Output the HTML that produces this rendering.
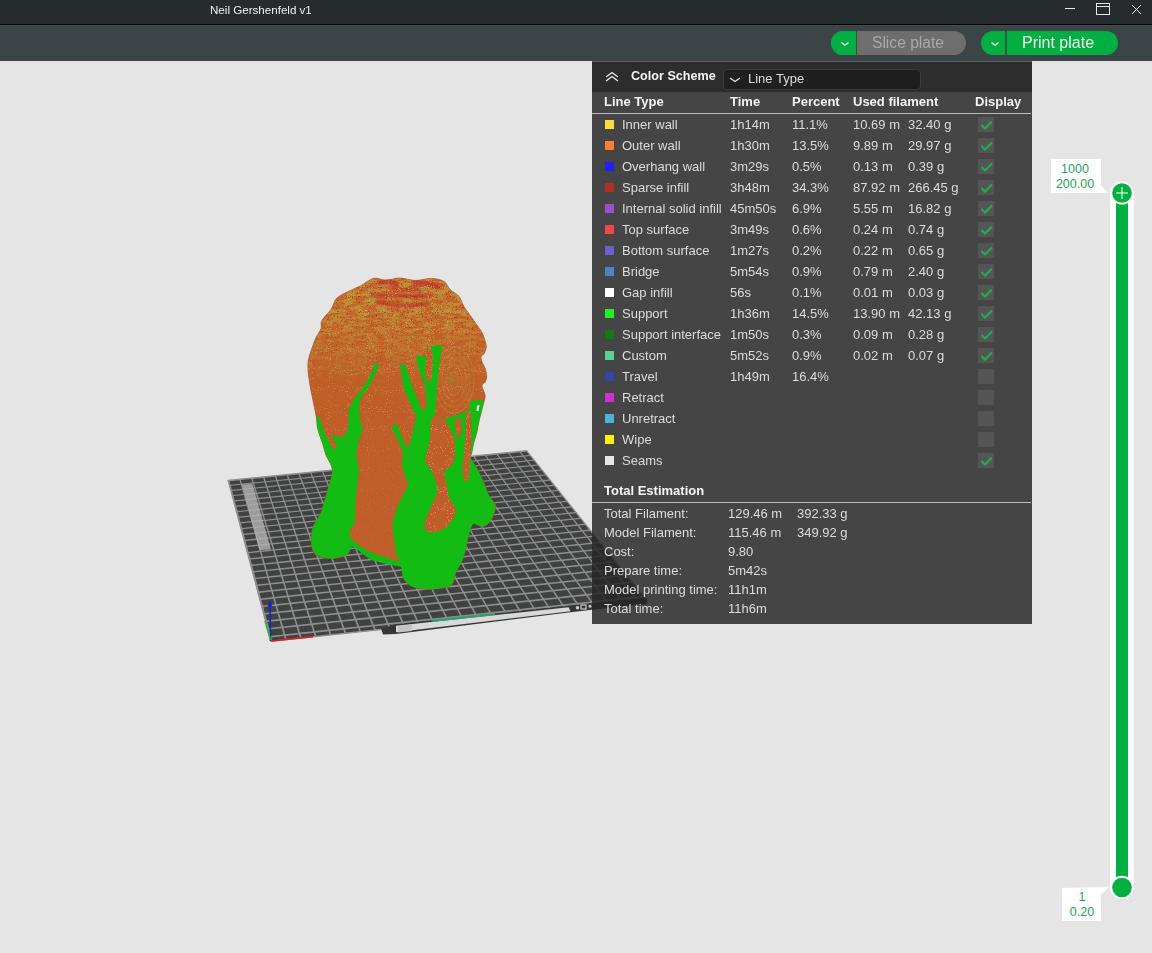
<!DOCTYPE html>
<html><head><meta charset="utf-8">
<style>
*{margin:0;padding:0;box-sizing:border-box}
html,body{width:1152px;height:953px;overflow:hidden;background:#e5e5e5;font-family:"Liberation Sans",sans-serif;-webkit-font-smoothing:antialiased}
.abs{position:absolute}
#title{will-change:transform;left:0;top:0;width:1152px;height:25px;background:#262c2e;border-bottom:1px solid #020305}
#title .t{left:210px;top:3px;color:#f0f0f0;font-size:11.6px;white-space:nowrap}
#tool{will-change:transform;left:0;top:25px;width:1152px;height:36px;background:#3b4446;border-top:1px solid #444a4c}
#panel{left:592px;top:61px;width:440px;height:563px;background:rgba(38,38,38,0.84);will-change:transform}
#ph{left:0;top:0;width:440px;height:31px;background:#2d2d2d}
.txt{color:#dcdcdc;font-size:13px;white-space:nowrap;line-height:15px}
.b{color:#f4f4f4}
.b{font-weight:bold}
.sq{width:9px;height:9px}
.cb{width:16px;height:15px;background:#555}
</style></head><body>
<svg class="abs" style="left:0;top:0" width="1152" height="953" viewBox="0 0 1152 953">
<polygon points="228.1,480.4 526.5,450.7 647.0,601.0 271.0,641.5" fill="#8e8e8e" stroke="#8e8e8e" stroke-width="1.2" stroke-linejoin="round"/>
<path d="M229.6,481.3 L239.5,480.3 L240.5,483.7 L230.5,484.7ZM230.8,485.8 L240.8,484.8 L242.0,488.8 L231.9,489.8ZM232.2,490.9 L242.3,489.9 L243.4,494.0 L233.3,495.0ZM233.6,496.1 L243.8,495.1 L244.9,499.2 L234.7,500.2ZM235.0,501.4 L245.3,500.4 L246.4,504.5 L236.1,505.6ZM236.4,506.7 L246.8,505.7 L248.0,510.0 L237.6,511.0ZM237.9,512.2 L248.3,511.1 L249.6,515.5 L239.1,516.5ZM239.4,517.8 L249.9,516.7 L251.2,521.1 L240.6,522.2ZM240.9,523.4 L251.5,522.3 L252.8,526.8 L242.1,527.9ZM242.4,529.2 L253.2,528.1 L254.5,532.6 L243.7,533.7ZM244.0,535.0 L254.8,533.9 L256.2,538.5 L245.3,539.7ZM245.6,541.0 L256.5,539.9 L257.9,544.6 L246.9,545.7ZM247.2,547.0 L258.3,545.9 L259.6,550.7 L248.5,551.9ZM248.9,553.2 L260.0,552.1 L261.4,557.0 L250.2,558.1ZM250.6,559.5 L261.8,558.4 L263.2,563.4 L251.9,564.5ZM252.3,565.9 L263.6,564.8 L265.1,569.8 L253.7,571.0ZM254.1,572.5 L265.5,571.3 L267.0,576.5 L255.5,577.7ZM255.9,579.1 L267.4,577.9 L268.9,583.2 L257.3,584.4ZM257.7,585.9 L269.3,584.7 L270.9,590.1 L259.1,591.3ZM259.5,592.9 L271.3,591.6 L272.9,597.1 L261.0,598.4ZM261.4,599.9 L273.3,598.7 L274.9,604.3 L262.9,605.5ZM263.4,607.1 L275.4,605.9 L277.0,611.6 L264.9,612.9ZM265.3,614.5 L277.4,613.2 L279.1,619.0 L266.9,620.3ZM267.4,622.0 L279.6,620.7 L281.3,626.6 L269.0,627.9ZM269.4,629.6 L281.8,628.3 L283.5,634.4 L271.0,635.7ZM271.5,637.4 L284.0,636.1 L284.8,639.1 L272.3,640.5ZM240.9,480.1 L251.4,479.1 L252.4,482.5 L241.9,483.6ZM242.2,484.7 L252.7,483.6 L254.0,487.6 L243.3,488.7ZM243.7,489.8 L254.3,488.7 L255.5,492.7 L244.8,493.8ZM245.1,495.0 L255.9,493.9 L257.1,498.0 L246.3,499.1ZM246.7,500.2 L257.5,499.1 L258.7,503.3 L247.9,504.4ZM248.2,505.6 L259.1,504.5 L260.4,508.7 L249.4,509.8ZM249.8,511.0 L260.8,509.9 L262.1,514.2 L251.0,515.3ZM251.4,516.5 L262.5,515.4 L263.8,519.8 L252.6,520.9ZM253.0,522.2 L264.2,521.0 L265.5,525.5 L254.3,526.7ZM254.6,527.9 L265.9,526.8 L267.3,531.3 L255.9,532.5ZM256.3,533.8 L267.7,532.6 L269.1,537.2 L257.6,538.4ZM258.0,539.7 L269.5,538.5 L271.0,543.2 L259.4,544.4ZM259.8,545.8 L271.4,544.6 L272.8,549.4 L261.1,550.6ZM261.5,551.9 L273.2,550.7 L274.7,555.6 L262.9,556.8ZM263.3,558.2 L275.2,557.0 L276.7,562.0 L264.8,563.2ZM265.2,564.6 L277.1,563.4 L278.7,568.4 L266.6,569.7ZM267.1,571.1 L279.1,569.9 L280.7,575.0 L268.5,576.3ZM269.0,577.8 L281.1,576.5 L282.7,581.8 L270.5,583.1ZM270.9,584.5 L283.2,583.3 L284.8,588.6 L272.5,589.9ZM272.9,591.5 L285.3,590.1 L287.0,595.6 L274.5,596.9ZM274.9,598.5 L287.4,597.2 L289.1,602.8 L276.5,604.1ZM277.0,605.7 L289.6,604.3 L291.4,610.0 L278.6,611.4ZM279.1,613.0 L291.9,611.7 L293.6,617.5 L280.8,618.8ZM281.3,620.5 L294.1,619.1 L296.0,625.1 L283.0,626.4ZM283.5,628.1 L296.5,626.7 L298.3,632.8 L285.2,634.2ZM285.7,635.9 L298.8,634.5 L299.8,637.5 L286.6,638.9ZM252.7,479.0 L263.2,477.9 L264.3,481.4 L253.8,482.4ZM254.1,483.5 L264.6,482.5 L265.9,486.4 L255.3,487.5ZM255.7,488.6 L266.3,487.5 L267.6,491.5 L256.9,492.6ZM257.3,493.7 L268.0,492.7 L269.3,496.7 L258.5,497.8ZM258.9,499.0 L269.7,497.9 L271.0,502.0 L260.2,503.1ZM260.5,504.3 L271.4,503.2 L272.8,507.4 L261.8,508.6ZM262.2,509.7 L273.2,508.6 L274.6,512.9 L263.5,514.1ZM263.9,515.3 L275.0,514.1 L276.4,518.5 L265.2,519.7ZM265.6,520.9 L276.8,519.8 L278.3,524.2 L267.0,525.4ZM267.4,526.6 L278.7,525.5 L280.1,530.0 L268.8,531.2ZM269.2,532.4 L280.6,531.3 L282.1,535.9 L270.6,537.1ZM271.0,538.4 L282.5,537.2 L284.0,541.9 L272.5,543.1ZM272.9,544.4 L284.5,543.2 L286.0,548.0 L274.3,549.2ZM274.8,550.6 L286.5,549.3 L288.0,554.2 L276.3,555.4ZM276.7,556.8 L288.5,555.6 L290.1,560.6 L278.2,561.8ZM278.7,563.2 L290.6,562.0 L292.2,567.0 L280.2,568.3ZM280.7,569.7 L292.7,568.5 L294.4,573.6 L282.2,574.9ZM282.7,576.3 L294.8,575.1 L296.5,580.3 L284.3,581.6ZM284.8,583.1 L297.0,581.8 L298.8,587.2 L286.4,588.5ZM286.9,590.0 L299.3,588.7 L301.0,594.1 L288.6,595.5ZM289.1,597.0 L301.6,595.7 L303.4,601.3 L290.8,602.6ZM291.3,604.2 L303.9,602.8 L305.7,608.5 L293.0,609.9ZM293.5,611.5 L306.3,610.1 L308.1,615.9 L295.3,617.3ZM295.8,618.9 L308.7,617.6 L310.6,623.5 L297.6,624.9ZM298.2,626.5 L311.2,625.2 L313.1,631.2 L300.0,632.6ZM300.6,634.3 L313.7,632.9 L314.7,635.9 L301.5,637.3ZM264.5,477.8 L275.0,476.7 L276.2,480.2 L265.7,481.2ZM266.0,482.3 L276.5,481.3 L277.9,485.2 L267.3,486.3ZM267.7,487.4 L278.3,486.3 L279.7,490.3 L269.0,491.4ZM269.4,492.5 L280.1,491.5 L281.5,495.5 L270.7,496.6ZM271.1,497.8 L281.9,496.7 L283.3,500.8 L272.4,501.9ZM272.8,503.1 L283.7,502.0 L285.2,506.2 L274.2,507.3ZM274.6,508.5 L285.6,507.4 L287.1,511.7 L276.0,512.8ZM276.4,514.0 L287.5,512.9 L289.0,517.2 L277.9,518.4ZM278.3,519.6 L289.4,518.5 L291.0,522.9 L279.7,524.1ZM280.1,525.3 L291.4,524.2 L293.0,528.7 L281.6,529.8ZM282.0,531.1 L293.4,530.0 L295.0,534.6 L283.6,535.7ZM284.0,537.0 L295.4,535.9 L297.1,540.5 L285.5,541.7ZM286.0,543.1 L297.5,541.9 L299.2,546.6 L287.5,547.8ZM288.0,549.2 L299.6,548.0 L301.3,552.8 L289.6,554.1ZM290.0,555.4 L301.8,554.2 L303.5,559.2 L291.6,560.4ZM292.1,561.8 L304.0,560.6 L305.7,565.6 L293.8,566.9ZM294.2,568.3 L306.2,567.0 L308.0,572.2 L295.9,573.4ZM296.4,574.9 L308.5,573.6 L310.3,578.9 L298.1,580.2ZM298.6,581.6 L310.9,580.4 L312.7,585.7 L300.4,587.0ZM300.9,588.5 L313.2,587.2 L315.1,592.7 L302.7,594.0ZM303.2,595.5 L315.6,594.2 L317.6,599.8 L305.0,601.1ZM305.5,602.7 L318.1,601.3 L320.1,607.0 L307.4,608.3ZM307.9,609.9 L320.6,608.6 L322.6,614.4 L309.8,615.7ZM310.4,617.4 L323.2,616.0 L325.2,621.9 L312.3,623.3ZM312.8,625.0 L325.8,623.6 L327.9,629.6 L314.8,631.0ZM315.4,632.7 L328.5,631.3 L329.5,634.3 L316.4,635.7ZM276.3,476.6 L286.8,475.6 L288.0,479.0 L277.5,480.0ZM277.9,481.1 L288.4,480.1 L289.9,484.0 L279.3,485.1ZM279.7,486.2 L290.3,485.1 L291.7,489.1 L281.1,490.2ZM281.5,491.3 L292.1,490.2 L293.6,494.3 L282.9,495.4ZM283.3,496.5 L294.0,495.4 L295.6,499.6 L284.7,500.7ZM285.1,501.8 L296.0,500.7 L297.5,504.9 L286.6,506.0ZM287.0,507.2 L298.0,506.1 L299.5,510.4 L288.5,511.5ZM288.9,512.7 L300.0,511.6 L301.6,516.0 L290.4,517.1ZM290.9,518.3 L302.0,517.2 L303.6,521.6 L292.4,522.8ZM292.9,524.0 L304.1,522.9 L305.8,527.4 L294.4,528.5ZM294.9,529.8 L306.2,528.6 L307.9,533.2 L296.5,534.4ZM296.9,535.7 L308.4,534.5 L310.1,539.2 L298.6,540.4ZM299.0,541.7 L310.6,540.5 L312.3,545.3 L300.7,546.5ZM301.2,547.8 L312.8,546.6 L314.6,551.5 L302.9,552.7ZM303.3,554.1 L315.1,552.8 L316.9,557.8 L305.1,559.0ZM305.5,560.4 L317.4,559.2 L319.3,564.2 L307.3,565.5ZM307.8,566.9 L319.8,565.6 L321.7,570.8 L309.6,572.0ZM310.1,573.5 L322.2,572.2 L324.1,577.4 L311.9,578.7ZM312.4,580.2 L324.7,578.9 L326.6,584.2 L314.3,585.5ZM314.8,587.0 L327.2,585.7 L329.2,591.2 L316.7,592.5ZM317.3,594.0 L329.7,592.7 L331.8,598.3 L319.2,599.6ZM319.7,601.1 L332.3,599.8 L334.4,605.5 L321.7,606.8ZM322.3,608.4 L335.0,607.1 L337.1,612.8 L324.3,614.2ZM324.9,615.8 L337.7,614.5 L339.9,620.4 L326.9,621.7ZM327.5,623.4 L340.5,622.0 L342.7,628.0 L329.6,629.4ZM330.2,631.1 L343.3,629.7 L344.4,632.7 L331.2,634.1ZM288.1,475.4 L298.5,474.4 L299.9,477.8 L289.4,478.9ZM289.8,479.9 L300.3,478.9 L301.8,482.8 L291.2,483.9ZM291.6,485.0 L302.2,483.9 L303.8,487.9 L293.1,489.0ZM293.5,490.1 L304.2,489.0 L305.8,493.1 L295.0,494.2ZM295.4,495.3 L306.2,494.2 L307.8,498.3 L297.0,499.4ZM297.4,500.6 L308.3,499.5 L309.9,503.7 L299.0,504.8ZM299.4,506.0 L310.3,504.9 L312.0,509.1 L301.0,510.3ZM301.4,511.5 L312.5,510.3 L314.1,514.7 L303.0,515.8ZM303.5,517.0 L314.6,515.9 L316.3,520.3 L305.1,521.5ZM305.6,522.7 L316.8,521.6 L318.5,526.1 L307.2,527.2ZM307.7,528.5 L319.0,527.3 L320.8,531.9 L309.4,533.1ZM309.9,534.4 L321.3,533.2 L323.1,537.9 L311.6,539.1ZM312.1,540.4 L323.6,539.2 L325.5,543.9 L313.8,545.1ZM314.3,546.5 L326.0,545.3 L327.8,550.1 L316.1,551.3ZM316.6,552.7 L328.4,551.5 L330.3,556.4 L318.4,557.6ZM319.0,559.0 L330.8,557.8 L332.8,562.8 L320.8,564.0ZM321.3,565.5 L333.3,564.2 L335.3,569.3 L323.2,570.6ZM323.8,572.0 L335.9,570.8 L337.9,576.0 L325.7,577.3ZM326.2,578.7 L338.4,577.5 L340.5,582.8 L328.2,584.1ZM328.8,585.6 L341.1,584.3 L343.2,589.7 L330.8,591.0ZM331.3,592.5 L343.8,591.2 L345.9,596.8 L333.4,598.1ZM334.0,599.6 L346.5,598.3 L348.7,604.0 L336.0,605.3ZM336.6,606.9 L349.3,605.5 L351.5,611.3 L338.8,612.7ZM339.4,614.3 L352.2,612.9 L354.4,618.8 L341.5,620.2ZM342.1,621.8 L355.1,620.4 L357.4,626.4 L344.4,627.8ZM345.0,629.5 L358.1,628.1 L359.2,631.1 L346.1,632.5ZM299.9,474.3 L310.3,473.2 L311.7,476.6 L301.2,477.7ZM301.6,478.8 L312.1,477.7 L313.7,481.6 L303.2,482.7ZM303.6,483.8 L314.2,482.7 L315.8,486.7 L305.1,487.8ZM305.6,488.9 L316.2,487.8 L317.9,491.9 L307.2,492.9ZM307.6,494.1 L318.4,493.0 L320.0,497.1 L309.2,498.2ZM309.7,499.4 L320.5,498.3 L322.2,502.4 L311.3,503.6ZM311.8,504.7 L322.7,503.6 L324.4,507.9 L313.4,509.0ZM313.9,510.2 L324.9,509.1 L326.7,513.4 L315.6,514.5ZM316.1,515.8 L327.2,514.6 L329.0,519.0 L317.8,520.2ZM318.3,521.4 L329.5,520.3 L331.3,524.8 L320.0,525.9ZM320.5,527.2 L331.8,526.0 L333.7,530.6 L322.3,531.8ZM322.8,533.1 L334.2,531.9 L336.1,536.5 L324.6,537.7ZM325.1,539.0 L336.6,537.8 L338.6,542.6 L327.0,543.8ZM327.5,545.1 L339.1,543.9 L341.1,548.7 L329.4,549.9ZM329.9,551.3 L341.6,550.1 L343.6,555.0 L331.8,556.2ZM332.4,557.6 L344.2,556.4 L346.2,561.4 L334.3,562.6ZM334.9,564.1 L346.8,562.8 L348.9,567.9 L336.9,569.2ZM337.4,570.6 L349.5,569.3 L351.6,574.5 L339.5,575.8ZM340.0,577.3 L352.2,576.0 L354.4,581.3 L342.1,582.6ZM342.7,584.1 L355.0,582.8 L357.2,588.2 L344.8,589.5ZM345.4,591.1 L357.8,589.7 L360.1,595.3 L347.5,596.6ZM348.1,598.1 L360.7,596.8 L363.0,602.4 L350.3,603.8ZM351.0,605.4 L363.6,604.0 L366.0,609.8 L353.2,611.1ZM353.8,612.7 L366.6,611.4 L369.0,617.2 L356.1,618.6ZM356.8,620.3 L369.7,618.9 L372.1,624.9 L359.1,626.3ZM359.8,628.0 L372.8,626.5 L374.0,629.5 L360.9,630.9ZM311.6,473.1 L322.0,472.0 L323.5,475.5 L313.0,476.5ZM313.5,477.6 L324.0,476.5 L325.6,480.4 L315.1,481.5ZM315.5,482.6 L326.1,481.5 L327.8,485.5 L317.2,486.6ZM317.6,487.7 L328.3,486.6 L330.0,490.6 L319.3,491.7ZM319.8,492.9 L330.5,491.8 L332.2,495.9 L321.4,497.0ZM321.9,498.1 L332.7,497.0 L334.5,501.2 L323.6,502.3ZM324.1,503.5 L335.0,502.4 L336.9,506.6 L325.9,507.7ZM326.3,508.9 L337.4,507.8 L339.2,512.1 L328.1,513.3ZM328.6,514.5 L339.7,513.4 L341.6,517.7 L330.4,518.9ZM330.9,520.1 L342.1,519.0 L344.1,523.5 L332.8,524.6ZM333.3,525.9 L344.6,524.7 L346.6,529.3 L335.2,530.4ZM335.7,531.7 L347.1,530.6 L349.1,535.2 L337.6,536.4ZM338.1,537.7 L349.6,536.5 L351.7,541.2 L340.1,542.4ZM340.6,543.8 L352.2,542.6 L354.3,547.4 L342.6,548.6ZM343.2,549.9 L354.9,548.7 L357.0,553.6 L345.2,554.8ZM345.7,556.2 L357.6,555.0 L359.7,560.0 L347.8,561.2ZM348.4,562.6 L360.3,561.4 L362.5,566.5 L350.5,567.7ZM351.1,569.2 L363.1,567.9 L365.3,573.1 L353.2,574.4ZM353.8,575.9 L366.0,574.6 L368.2,579.9 L356.0,581.1ZM356.6,582.6 L368.9,581.4 L371.2,586.7 L358.8,588.0ZM359.4,589.6 L371.8,588.3 L374.2,593.8 L361.7,595.1ZM362.3,596.6 L374.8,595.3 L377.2,600.9 L364.6,602.3ZM365.3,603.8 L377.9,602.5 L380.4,608.2 L367.6,609.6ZM368.3,611.2 L381.1,609.8 L383.6,615.7 L370.7,617.1ZM371.4,618.7 L384.3,617.3 L386.8,623.3 L373.8,624.7ZM374.5,626.4 L387.5,625.0 L388.8,627.9 L375.7,629.3ZM323.4,471.9 L333.8,470.9 L335.3,474.3 L324.9,475.3ZM325.3,476.4 L335.8,475.4 L337.5,479.2 L327.0,480.3ZM327.5,481.4 L338.0,480.3 L339.8,484.3 L329.2,485.4ZM329.7,486.5 L340.3,485.4 L342.1,489.4 L331.4,490.5ZM331.9,491.6 L342.6,490.6 L344.4,494.6 L333.7,495.7ZM334.1,496.9 L345.0,495.8 L346.8,500.0 L335.9,501.1ZM336.5,502.2 L347.4,501.1 L349.3,505.4 L338.3,506.5ZM338.8,507.7 L349.8,506.6 L351.7,510.9 L340.7,512.0ZM341.2,513.2 L352.3,512.1 L354.2,516.5 L343.1,517.6ZM343.6,518.8 L354.8,517.7 L356.8,522.2 L345.5,523.3ZM346.1,524.6 L357.4,523.4 L359.4,528.0 L348.0,529.1ZM348.6,530.4 L360.0,529.2 L362.1,533.9 L350.6,535.0ZM351.1,536.3 L362.6,535.2 L364.8,539.9 L353.2,541.1ZM353.7,542.4 L365.3,541.2 L367.5,546.0 L355.8,547.2ZM356.4,548.6 L368.1,547.4 L370.3,552.2 L358.5,553.5ZM359.1,554.8 L370.9,553.6 L373.2,558.6 L361.3,559.8ZM361.9,561.2 L373.8,560.0 L376.1,565.1 L364.1,566.3ZM364.7,567.8 L376.7,566.5 L379.0,571.7 L366.9,572.9ZM367.5,574.4 L379.7,573.1 L382.1,578.4 L369.8,579.7ZM370.5,581.2 L382.7,579.9 L385.1,585.3 L372.8,586.6ZM373.4,588.1 L385.8,586.8 L388.3,592.3 L375.8,593.6ZM376.5,595.1 L389.0,593.8 L391.5,599.4 L378.9,600.7ZM379.6,602.3 L392.2,601.0 L394.8,606.7 L382.0,608.0ZM382.7,609.7 L395.5,608.3 L398.1,614.1 L385.2,615.5ZM385.9,617.1 L398.8,615.8 L401.5,621.7 L388.5,623.1ZM389.2,624.8 L402.2,623.4 L403.6,626.3 L390.5,627.7ZM335.1,470.7 L345.5,469.7 L347.1,473.1 L336.7,474.1ZM337.1,475.2 L347.6,474.2 L349.4,478.1 L338.9,479.1ZM339.4,480.2 L349.9,479.1 L351.8,483.1 L341.2,484.2ZM341.7,485.3 L352.3,484.2 L354.2,488.2 L343.5,489.3ZM344.0,490.4 L354.7,489.3 L356.6,493.4 L345.8,494.5ZM346.4,495.7 L357.2,494.6 L359.1,498.7 L348.2,499.8ZM348.8,501.0 L359.7,499.9 L361.6,504.1 L350.7,505.2ZM351.2,506.4 L362.2,505.3 L364.2,509.6 L353.2,510.7ZM353.7,511.9 L364.8,510.8 L366.8,515.2 L355.7,516.3ZM356.2,517.5 L367.4,516.4 L369.5,520.9 L358.3,522.0ZM358.8,523.3 L370.1,522.1 L372.2,526.6 L360.9,527.8ZM361.5,529.1 L372.8,527.9 L375.0,532.5 L363.5,533.7ZM364.1,535.0 L375.6,533.8 L377.8,538.5 L366.3,539.7ZM366.9,541.0 L378.4,539.9 L380.7,544.6 L369.0,545.8ZM369.6,547.2 L381.3,546.0 L383.6,550.9 L371.8,552.1ZM372.5,553.5 L384.3,552.2 L386.6,557.2 L374.7,558.4ZM375.3,559.8 L387.2,558.6 L389.6,563.7 L377.6,564.9ZM378.3,566.3 L390.3,565.1 L392.7,570.2 L380.6,571.5ZM381.3,573.0 L393.4,571.7 L395.9,577.0 L383.6,578.2ZM384.3,579.7 L396.6,578.4 L399.1,583.8 L386.7,585.1ZM387.4,586.6 L399.8,585.3 L402.4,590.8 L389.9,592.1ZM390.6,593.6 L403.1,592.3 L405.7,597.9 L393.1,599.2ZM393.8,600.8 L406.4,599.5 L409.1,605.2 L396.4,606.5ZM397.1,608.1 L409.9,606.8 L412.6,612.6 L399.8,613.9ZM400.5,615.6 L413.4,614.2 L416.1,620.1 L403.2,621.5ZM403.9,623.2 L416.9,621.8 L418.3,624.7 L405.3,626.1ZM346.8,469.6 L357.2,468.5 L358.9,471.9 L348.4,473.0ZM348.9,474.0 L359.4,473.0 L361.3,476.9 L350.8,477.9ZM351.3,479.0 L361.8,478.0 L363.7,481.9 L353.2,483.0ZM353.7,484.1 L364.3,483.0 L366.2,487.0 L355.6,488.1ZM356.1,489.2 L366.8,488.1 L368.8,492.2 L358.0,493.3ZM358.6,494.4 L369.4,493.3 L371.4,497.5 L360.5,498.6ZM361.1,499.7 L372.0,498.6 L374.0,502.9 L363.1,504.0ZM363.6,505.2 L374.6,504.0 L376.7,508.3 L365.7,509.4ZM366.2,510.7 L377.3,509.5 L379.4,513.9 L368.3,515.0ZM368.9,516.3 L380.0,515.1 L382.2,519.6 L371.0,520.7ZM371.6,522.0 L382.8,520.8 L385.0,525.3 L373.7,526.5ZM374.3,527.8 L385.7,526.6 L387.9,531.2 L376.5,532.4ZM377.1,533.7 L388.6,532.5 L390.9,537.2 L379.3,538.4ZM379.9,539.7 L391.5,538.5 L393.9,543.3 L382.2,544.5ZM382.8,545.8 L394.5,544.6 L396.9,549.5 L385.1,550.7ZM385.8,552.1 L397.6,550.8 L400.0,555.8 L388.1,557.0ZM388.8,558.4 L400.7,557.2 L403.2,562.2 L391.2,563.5ZM391.9,564.9 L403.9,563.7 L406.4,568.8 L394.3,570.1ZM395.0,571.5 L407.1,570.3 L409.7,575.5 L397.5,576.8ZM398.2,578.3 L410.4,577.0 L413.0,582.3 L400.7,583.6ZM401.4,585.1 L413.7,583.8 L416.4,589.3 L404.0,590.6ZM404.7,592.1 L417.2,590.8 L419.9,596.4 L407.3,597.7ZM408.1,599.3 L420.7,598.0 L423.5,603.6 L410.8,605.0ZM411.5,606.6 L424.2,605.2 L427.1,611.0 L414.3,612.4ZM415.0,614.0 L427.9,612.7 L430.8,618.6 L417.8,619.9ZM418.6,621.6 L431.6,620.2 L433.0,623.2 L420.0,624.6ZM358.5,468.4 L368.9,467.4 L370.6,470.8 L360.2,471.8ZM360.7,472.9 L371.2,471.8 L373.1,475.7 L362.6,476.7ZM363.2,477.8 L373.7,476.8 L375.7,480.7 L365.1,481.8ZM365.7,482.9 L376.3,481.8 L378.3,485.8 L367.6,486.9ZM368.2,488.0 L378.9,486.9 L381.0,491.0 L370.2,492.1ZM370.8,493.2 L381.5,492.1 L383.6,496.2 L372.8,497.3ZM373.4,498.5 L384.2,497.4 L386.4,501.6 L375.4,502.7ZM376.0,503.9 L387.0,502.8 L389.2,507.1 L378.1,508.2ZM378.7,509.4 L389.8,508.3 L392.0,512.6 L380.9,513.7ZM381.5,515.0 L392.6,513.8 L394.9,518.3 L383.7,519.4ZM384.3,520.7 L395.5,519.5 L397.8,524.0 L386.5,525.2ZM387.1,526.4 L398.5,525.3 L400.8,529.9 L389.4,531.0ZM390.1,532.3 L401.5,531.2 L403.9,535.8 L392.4,537.0ZM393.0,538.3 L404.6,537.2 L407.0,541.9 L395.4,543.1ZM396.0,544.5 L407.7,543.3 L410.2,548.1 L398.4,549.3ZM399.1,550.7 L410.9,549.5 L413.4,554.4 L401.5,555.6ZM402.2,557.0 L414.1,555.8 L416.7,560.8 L404.7,562.1ZM405.4,563.5 L417.4,562.2 L420.0,567.4 L407.9,568.6ZM408.7,570.1 L420.8,568.8 L423.4,574.1 L411.2,575.3ZM412.0,576.8 L424.2,575.5 L426.9,580.9 L414.6,582.2ZM415.4,583.7 L427.7,582.4 L430.5,587.8 L418.0,589.1ZM418.8,590.7 L431.2,589.3 L434.1,594.9 L421.5,596.2ZM422.3,597.8 L434.9,596.4 L437.8,602.1 L425.1,603.5ZM425.9,605.1 L438.6,603.7 L441.5,609.5 L428.7,610.8ZM429.5,612.5 L442.4,611.1 L445.4,617.0 L432.5,618.4ZM433.3,620.0 L446.2,618.7 L447.7,621.6 L434.7,623.0ZM370.2,467.2 L380.6,466.2 L382.4,469.6 L372.0,470.6ZM372.5,471.7 L382.9,470.7 L385.0,474.5 L374.5,475.5ZM375.1,476.6 L385.6,475.6 L387.6,479.5 L377.1,480.6ZM377.6,481.7 L388.2,480.6 L390.3,484.6 L379.7,485.6ZM380.3,486.8 L390.9,485.7 L393.1,489.7 L382.3,490.8ZM382.9,492.0 L393.7,490.9 L395.9,495.0 L385.1,496.1ZM385.7,497.3 L396.5,496.2 L398.7,500.3 L387.8,501.5ZM388.4,502.6 L399.4,501.5 L401.6,505.8 L390.6,506.9ZM391.2,508.1 L402.3,507.0 L404.6,511.3 L393.5,512.5ZM394.1,513.7 L405.2,512.6 L407.6,517.0 L396.4,518.1ZM397.0,519.4 L408.2,518.2 L410.6,522.7 L399.3,523.9ZM400.0,525.1 L411.3,524.0 L413.7,528.5 L402.3,529.7ZM403.0,531.0 L414.4,529.8 L416.9,534.5 L405.4,535.7ZM406.1,537.0 L417.6,535.8 L420.1,540.6 L408.5,541.8ZM409.2,543.1 L420.8,541.9 L423.4,546.7 L411.7,547.9ZM412.4,549.3 L424.1,548.1 L426.8,553.0 L414.9,554.2ZM415.6,555.6 L427.5,554.4 L430.2,559.4 L418.2,560.7ZM419.0,562.1 L430.9,560.8 L433.6,565.9 L421.6,567.2ZM422.3,568.7 L434.4,567.4 L437.2,572.6 L425.0,573.9ZM425.8,575.4 L438.0,574.1 L440.8,579.4 L428.5,580.7ZM429.3,582.2 L441.6,580.9 L444.5,586.3 L432.1,587.6ZM432.9,589.2 L445.3,587.8 L448.2,593.4 L435.7,594.7ZM436.5,596.3 L449.1,594.9 L452.1,600.6 L439.4,601.9ZM440.2,603.5 L452.9,602.2 L456.0,607.9 L443.2,609.3ZM444.0,610.9 L456.9,609.5 L460.0,615.4 L447.1,616.8ZM447.9,618.5 L460.9,617.1 L462.4,620.0 L449.4,621.4ZM381.9,466.1 L392.2,465.1 L394.1,468.4 L383.7,469.4ZM384.3,470.5 L394.7,469.5 L396.8,473.3 L386.3,474.4ZM386.9,475.4 L397.4,474.4 L399.6,478.3 L389.0,479.4ZM389.6,480.5 L400.2,479.4 L402.4,483.4 L391.7,484.4ZM392.3,485.6 L403.0,484.5 L405.2,488.5 L394.5,489.6ZM395.1,490.7 L405.8,489.7 L408.1,493.8 L397.3,494.9ZM397.9,496.0 L408.8,494.9 L411.1,499.1 L400.2,500.2ZM400.8,501.4 L411.7,500.3 L414.1,504.5 L403.1,505.6ZM403.7,506.8 L414.7,505.7 L417.1,510.0 L406.0,511.2ZM406.7,512.4 L417.8,511.3 L420.2,515.7 L409.0,516.8ZM409.7,518.1 L420.9,516.9 L423.4,521.4 L412.1,522.6ZM412.8,523.8 L424.1,522.7 L426.6,527.2 L415.2,528.4ZM415.9,529.7 L427.3,528.5 L429.9,533.2 L418.4,534.3ZM419.1,535.7 L430.6,534.5 L433.2,539.2 L421.6,540.4ZM422.4,541.7 L434.0,540.5 L436.7,545.4 L424.9,546.6ZM425.7,547.9 L437.4,546.7 L440.1,551.6 L428.3,552.9ZM429.0,554.2 L440.9,553.0 L443.7,558.0 L431.7,559.3ZM432.5,560.7 L444.4,559.4 L447.3,564.5 L435.2,565.8ZM436.0,567.2 L448.1,566.0 L450.9,571.2 L438.8,572.4ZM439.6,573.9 L451.7,572.6 L454.7,577.9 L442.4,579.2ZM443.2,580.7 L455.5,579.4 L458.5,584.8 L446.1,586.1ZM446.9,587.7 L459.3,586.4 L462.4,591.9 L449.9,593.2ZM450.7,594.8 L463.2,593.4 L466.4,599.1 L453.7,600.4ZM454.6,602.0 L467.2,600.6 L470.4,606.4 L457.6,607.7ZM458.5,609.4 L471.3,608.0 L474.5,613.9 L461.7,615.2ZM462.5,616.9 L475.5,615.5 L477.1,618.4 L464.1,619.8ZM393.6,464.9 L403.9,463.9 L405.8,467.2 L395.4,468.3ZM396.0,469.3 L406.4,468.3 L408.6,472.1 L398.2,473.2ZM398.8,474.3 L409.2,473.2 L411.5,477.1 L400.9,478.2ZM401.5,479.3 L412.1,478.2 L414.4,482.2 L403.7,483.2ZM404.4,484.3 L415.0,483.3 L417.3,487.3 L406.6,488.4ZM407.2,489.5 L418.0,488.4 L420.3,492.5 L409.5,493.6ZM410.2,494.8 L421.0,493.7 L423.4,497.9 L412.5,499.0ZM413.1,500.1 L424.1,499.0 L426.5,503.3 L415.5,504.4ZM416.2,505.6 L427.2,504.5 L429.7,508.8 L418.6,509.9ZM419.2,511.1 L430.4,510.0 L432.9,514.4 L421.7,515.5ZM422.4,516.8 L433.6,515.6 L436.1,520.1 L424.9,521.2ZM425.6,522.5 L436.9,521.3 L439.5,525.9 L428.1,527.1ZM428.8,528.4 L440.2,527.2 L442.9,531.8 L431.4,533.0ZM432.1,534.3 L443.6,533.1 L446.3,537.8 L434.8,539.0ZM435.5,540.4 L447.1,539.2 L449.9,544.0 L438.2,545.2ZM438.9,546.6 L450.6,545.3 L453.5,550.2 L441.7,551.5ZM442.4,552.8 L454.3,551.6 L457.1,556.6 L445.2,557.8ZM446.0,559.3 L457.9,558.0 L460.8,563.1 L448.8,564.4ZM449.6,565.8 L461.7,564.5 L464.6,569.7 L452.5,571.0ZM453.3,572.5 L465.5,571.2 L468.5,576.5 L456.3,577.8ZM457.1,579.3 L469.4,578.0 L472.5,583.4 L460.1,584.7ZM460.9,586.2 L473.3,584.9 L476.5,590.4 L464.0,591.7ZM464.9,593.3 L477.4,591.9 L480.6,597.5 L468.0,598.9ZM468.9,600.5 L481.5,599.1 L484.8,604.8 L472.1,606.2ZM473.0,607.8 L485.7,606.5 L489.1,612.3 L476.2,613.7ZM477.1,615.3 L490.0,613.9 L491.7,616.8 L478.8,618.2ZM405.2,463.8 L415.5,462.7 L417.5,466.1 L407.2,467.1ZM407.8,468.2 L418.1,467.1 L420.4,471.0 L410.0,472.0ZM410.6,473.1 L421.1,472.0 L423.4,475.9 L412.8,477.0ZM413.5,478.1 L424.0,477.0 L426.4,481.0 L415.8,482.0ZM416.4,483.1 L427.0,482.1 L429.4,486.1 L418.7,487.2ZM419.4,488.3 L430.1,487.2 L432.5,491.3 L421.7,492.4ZM422.4,493.5 L433.2,492.4 L435.7,496.6 L424.8,497.7ZM425.5,498.9 L436.4,497.8 L438.9,502.0 L427.9,503.1ZM428.6,504.3 L439.6,503.2 L442.2,507.5 L431.1,508.6ZM431.8,509.8 L442.9,508.7 L445.5,513.1 L434.3,514.2ZM435.0,515.5 L446.2,514.3 L448.9,518.8 L437.6,519.9ZM438.3,521.2 L449.6,520.0 L452.3,524.6 L441.0,525.7ZM441.7,527.0 L453.1,525.9 L455.8,530.5 L444.4,531.7ZM445.1,533.0 L456.6,531.8 L459.4,536.5 L447.8,537.7ZM448.6,539.0 L460.2,537.8 L463.1,542.6 L451.4,543.8ZM452.2,545.2 L463.9,544.0 L466.8,548.8 L455.0,550.1ZM455.8,551.5 L467.6,550.2 L470.6,555.2 L458.7,556.4ZM459.5,557.9 L471.4,556.6 L474.4,561.7 L462.4,562.9ZM463.2,564.4 L475.3,563.1 L478.3,568.3 L466.2,569.6ZM467.1,571.0 L479.2,569.7 L482.4,575.0 L470.1,576.3ZM471.0,577.8 L483.2,576.5 L486.4,581.9 L474.1,583.2ZM475.0,584.7 L487.3,583.4 L490.6,588.9 L478.1,590.2ZM479.0,591.7 L491.5,590.4 L494.9,596.0 L482.3,597.4ZM483.2,598.9 L495.8,597.6 L499.2,603.3 L486.5,604.7ZM487.4,606.3 L500.1,604.9 L503.6,610.7 L490.8,612.1ZM491.7,613.8 L504.6,612.4 L506.3,615.3 L493.4,616.7ZM416.9,462.6 L427.2,461.6 L429.2,464.9 L418.9,465.9ZM419.5,467.0 L429.9,466.0 L432.2,469.8 L421.8,470.8ZM422.4,471.9 L432.9,470.8 L435.2,474.7 L424.7,475.8ZM425.4,476.9 L435.9,475.8 L438.3,479.7 L427.7,480.8ZM428.4,481.9 L439.0,480.9 L441.5,484.9 L430.8,485.9ZM431.5,487.1 L442.2,486.0 L444.7,490.1 L433.9,491.2ZM434.6,492.3 L445.4,491.2 L448.0,495.4 L437.1,496.5ZM437.8,497.6 L448.7,496.5 L451.3,500.7 L440.3,501.9ZM441.0,503.0 L452.0,501.9 L454.7,506.2 L443.6,507.4ZM444.3,508.6 L455.4,507.4 L458.1,511.8 L446.9,512.9ZM447.7,514.2 L458.9,513.0 L461.6,517.5 L450.3,518.6ZM451.1,519.9 L462.4,518.7 L465.2,523.3 L453.8,524.4ZM454.6,525.7 L466.0,524.5 L468.8,529.1 L457.3,530.3ZM458.1,531.6 L469.6,530.4 L472.5,535.1 L460.9,536.3ZM461.7,537.7 L473.3,536.5 L476.2,541.2 L464.6,542.5ZM465.4,543.8 L477.1,542.6 L480.1,547.5 L468.3,548.7ZM469.1,550.1 L480.9,548.8 L484.0,553.8 L472.1,555.0ZM472.9,556.4 L484.9,555.2 L488.0,560.3 L476.0,561.5ZM476.8,562.9 L488.8,561.7 L492.0,566.8 L479.9,568.1ZM480.8,569.6 L492.9,568.3 L496.2,573.6 L483.9,574.8ZM484.8,576.3 L497.1,575.0 L500.4,580.4 L488.0,581.7ZM488.9,583.2 L501.3,581.9 L504.7,587.4 L492.2,588.7ZM493.1,590.2 L505.6,588.9 L509.1,594.5 L496.5,595.8ZM497.4,597.4 L510.0,596.1 L513.6,601.8 L500.8,603.1ZM501.8,604.7 L514.5,603.4 L518.1,609.2 L505.3,610.6ZM506.3,612.2 L519.1,610.8 L520.9,613.7 L508.0,615.1ZM428.5,461.4 L438.8,460.4 L440.9,463.7 L430.5,464.8ZM431.2,465.8 L441.6,464.8 L444.0,468.6 L433.6,469.6ZM434.2,470.7 L444.7,469.7 L447.1,473.5 L436.6,474.6ZM437.3,475.7 L447.8,474.6 L450.3,478.5 L439.7,479.6ZM440.4,480.7 L451.0,479.7 L453.6,483.6 L442.9,484.7ZM443.6,485.9 L454.3,484.8 L456.9,488.8 L446.1,489.9ZM446.8,491.1 L457.6,490.0 L460.2,494.1 L449.4,495.2ZM450.1,496.4 L461.0,495.3 L463.7,499.5 L452.7,500.6ZM453.4,501.8 L464.4,500.7 L467.1,504.9 L456.1,506.1ZM456.9,507.3 L467.9,506.2 L470.7,510.5 L459.6,511.7ZM460.3,512.9 L471.5,511.7 L474.3,516.2 L463.1,517.3ZM463.8,518.6 L475.1,517.4 L478.0,521.9 L466.6,523.1ZM467.4,524.4 L478.8,523.2 L481.7,527.8 L470.3,529.0ZM471.1,530.3 L482.5,529.1 L485.5,533.8 L474.0,535.0ZM474.8,536.3 L486.4,535.1 L489.4,539.9 L477.8,541.1ZM478.6,542.4 L490.3,541.2 L493.4,546.1 L481.6,547.3ZM482.5,548.7 L494.2,547.4 L497.4,552.4 L485.5,553.6ZM486.4,555.0 L498.3,553.8 L501.5,558.8 L489.5,560.1ZM490.4,561.5 L502.4,560.3 L505.7,565.4 L493.6,566.7ZM494.5,568.1 L506.6,566.9 L510.0,572.1 L497.8,573.4ZM498.7,574.9 L510.9,573.6 L514.3,578.9 L502.0,580.2ZM502.9,581.7 L515.3,580.4 L518.7,585.9 L506.3,587.2ZM507.3,588.7 L519.7,587.4 L523.3,593.0 L510.7,594.3ZM511.7,595.9 L524.3,594.6 L527.9,600.2 L515.2,601.6ZM516.2,603.2 L528.9,601.8 L532.6,607.6 L519.8,609.0ZM520.8,610.6 L533.6,609.3 L535.5,612.1 L522.6,613.5ZM440.1,460.3 L450.4,459.3 L452.5,462.6 L442.2,463.6ZM442.9,464.7 L453.2,463.6 L455.7,467.4 L445.3,468.5ZM446.0,469.5 L456.4,468.5 L459.0,472.3 L448.5,473.4ZM449.2,474.5 L459.7,473.4 L462.3,477.3 L451.7,478.4ZM452.4,479.5 L463.0,478.4 L465.6,482.4 L455.0,483.5ZM455.7,484.6 L466.4,483.6 L469.0,487.6 L458.3,488.7ZM459.0,489.8 L469.8,488.8 L472.5,492.9 L461.7,494.0ZM462.4,495.1 L473.3,494.0 L476.0,498.2 L465.1,499.3ZM465.8,500.5 L476.8,499.4 L479.6,503.7 L468.6,504.8ZM469.4,506.0 L480.4,504.9 L483.3,509.2 L472.1,510.4ZM472.9,511.6 L484.1,510.5 L487.0,514.9 L475.8,516.0ZM476.6,517.3 L487.8,516.1 L490.8,520.6 L479.5,521.8ZM480.3,523.1 L491.6,521.9 L494.6,526.5 L483.2,527.7ZM484.0,529.0 L495.5,527.8 L498.6,532.4 L487.0,533.6ZM487.9,534.9 L499.4,533.8 L502.6,538.5 L490.9,539.7ZM491.8,541.1 L503.4,539.9 L506.6,544.7 L494.9,545.9ZM495.8,547.3 L507.5,546.1 L510.8,551.0 L498.9,552.2ZM499.8,553.6 L511.7,552.4 L515.0,557.4 L503.1,558.7ZM504.0,560.1 L516.0,558.8 L519.3,564.0 L507.3,565.2ZM508.2,566.7 L520.3,565.4 L523.7,570.6 L511.5,571.9ZM512.5,573.4 L524.7,572.1 L528.2,577.4 L515.9,578.8ZM516.9,580.3 L529.2,579.0 L532.8,584.4 L520.4,585.7ZM521.3,587.2 L533.8,585.9 L537.5,591.5 L524.9,592.8ZM525.9,594.4 L538.5,593.0 L542.2,598.7 L529.5,600.1ZM530.6,601.7 L543.3,600.3 L547.1,606.1 L534.3,607.4ZM535.3,609.1 L548.1,607.7 L550.0,610.6 L537.2,611.9ZM451.7,459.1 L461.9,458.1 L464.2,461.4 L453.9,462.4ZM454.6,463.5 L464.9,462.5 L467.5,466.2 L457.1,467.3ZM457.8,468.4 L468.2,467.3 L470.8,471.2 L460.3,472.2ZM461.1,473.3 L471.5,472.2 L474.2,476.1 L463.6,477.2ZM464.4,478.3 L475.0,477.2 L477.7,481.2 L467.0,482.3ZM467.7,483.4 L478.4,482.3 L481.2,486.4 L470.4,487.5ZM471.2,488.6 L481.9,487.5 L484.7,491.6 L473.9,492.7ZM474.7,493.9 L485.5,492.8 L488.4,497.0 L477.4,498.1ZM478.2,499.3 L489.2,498.2 L492.1,502.4 L481.0,503.5ZM481.8,504.7 L492.9,503.6 L495.8,507.9 L484.7,509.1ZM485.5,510.3 L496.7,509.2 L499.7,513.6 L488.4,514.7ZM489.3,516.0 L500.5,514.8 L503.6,519.3 L492.2,520.5ZM493.1,521.7 L504.4,520.6 L507.5,525.1 L496.1,526.3ZM497.0,527.6 L508.4,526.4 L511.6,531.1 L500.1,532.3ZM500.9,533.6 L512.5,532.4 L515.7,537.1 L504.1,538.4ZM505.0,539.7 L516.6,538.5 L519.9,543.3 L508.2,544.5ZM509.1,545.9 L520.8,544.7 L524.2,549.6 L512.3,550.8ZM513.2,552.2 L525.1,551.0 L528.5,556.0 L516.6,557.3ZM517.5,558.7 L529.5,557.4 L533.0,562.5 L520.9,563.8ZM521.9,565.2 L533.9,564.0 L537.5,569.2 L525.3,570.5ZM526.3,572.0 L538.5,570.7 L542.1,576.0 L529.8,577.3ZM530.8,578.8 L543.1,577.5 L546.8,582.9 L534.4,584.2ZM535.4,585.8 L547.8,584.4 L551.6,590.0 L539.1,591.3ZM540.1,592.9 L552.7,591.5 L556.5,597.2 L543.9,598.5ZM544.9,600.1 L557.6,598.8 L561.5,604.5 L548.7,605.9ZM549.8,607.5 L562.6,606.1 L564.6,609.0 L551.7,610.4ZM463.3,458.0 L473.5,457.0 L475.8,460.3 L465.5,461.3ZM466.2,462.3 L476.6,461.3 L479.2,465.1 L468.8,466.1ZM469.6,467.2 L480.0,466.1 L482.6,470.0 L472.2,471.0ZM472.9,472.1 L483.4,471.0 L486.1,474.9 L475.6,476.0ZM476.3,477.1 L486.9,476.0 L489.7,480.0 L479.0,481.1ZM479.8,482.2 L490.5,481.1 L493.3,485.2 L482.6,486.2ZM483.3,487.4 L494.1,486.3 L497.0,490.4 L486.1,491.5ZM486.9,492.6 L497.8,491.5 L500.7,495.7 L489.8,496.8ZM490.6,498.0 L501.5,496.9 L504.5,501.1 L493.5,502.3ZM494.3,503.5 L505.3,502.3 L508.4,506.7 L497.3,507.8ZM498.1,509.0 L509.2,507.9 L512.3,512.3 L501.1,513.4ZM502.0,514.7 L513.2,513.5 L516.3,518.0 L505.0,519.2ZM505.9,520.4 L517.2,519.3 L520.4,523.8 L509.0,525.0ZM509.9,526.3 L521.3,525.1 L524.6,529.7 L513.1,530.9ZM514.0,532.2 L525.5,531.1 L528.8,535.8 L517.2,537.0ZM518.1,538.3 L529.7,537.1 L533.1,541.9 L521.4,543.2ZM522.3,544.5 L534.1,543.3 L537.5,548.2 L525.7,549.4ZM526.6,550.8 L538.5,549.6 L542.0,554.6 L530.1,555.8ZM531.0,557.3 L543.0,556.0 L546.6,561.1 L534.5,562.4ZM535.5,563.8 L547.6,562.5 L551.2,567.7 L539.1,569.0ZM540.1,570.5 L552.2,569.2 L556.0,574.5 L543.7,575.8ZM544.7,577.3 L557.0,576.0 L560.8,581.4 L548.4,582.7ZM549.5,584.3 L561.9,582.9 L565.7,588.5 L553.2,589.8ZM554.3,591.3 L566.8,590.0 L570.8,595.6 L558.2,597.0ZM559.2,598.6 L571.9,597.2 L575.9,603.0 L563.2,604.3ZM564.3,606.0 L577.1,604.6 L579.1,607.4 L566.2,608.8ZM474.8,456.8 L485.1,455.8 L487.5,459.1 L477.2,460.1ZM477.9,461.2 L488.2,460.1 L490.9,463.9 L480.6,464.9ZM481.3,466.0 L491.7,465.0 L494.5,468.8 L484.0,469.8ZM484.8,470.9 L495.2,469.9 L498.0,473.7 L487.5,474.8ZM488.3,475.9 L498.8,474.8 L501.7,478.8 L491.1,479.9ZM491.8,481.0 L502.5,479.9 L505.4,483.9 L494.7,485.0ZM495.5,486.2 L506.2,485.1 L509.2,489.2 L498.4,490.2ZM499.2,491.4 L510.0,490.3 L513.0,494.5 L502.1,495.6ZM502.9,496.8 L513.9,495.6 L516.9,499.9 L505.9,501.0ZM506.8,502.2 L517.8,501.1 L520.9,505.4 L509.8,506.5ZM510.7,507.7 L521.8,506.6 L525.0,511.0 L513.8,512.1ZM514.6,513.4 L525.8,512.2 L529.1,516.7 L517.8,517.8ZM518.7,519.1 L530.0,517.9 L533.3,522.5 L521.9,523.7ZM522.8,524.9 L534.2,523.8 L537.5,528.4 L526.1,529.6ZM527.0,530.9 L538.5,529.7 L541.9,534.4 L530.3,535.6ZM531.2,537.0 L542.9,535.8 L546.3,540.6 L534.6,541.8ZM535.6,543.1 L547.3,541.9 L550.9,546.8 L539.1,548.0ZM540.0,549.4 L551.9,548.2 L555.5,553.2 L543.5,554.4ZM544.5,555.8 L556.5,554.6 L560.2,559.7 L548.1,560.9ZM549.1,562.4 L561.2,561.1 L564.9,566.3 L552.8,567.6ZM553.8,569.0 L566.0,567.8 L569.8,573.0 L557.6,574.3ZM558.6,575.8 L570.9,574.5 L574.8,579.9 L562.4,581.2ZM563.5,582.8 L575.9,581.4 L579.9,586.9 L567.4,588.3ZM568.5,589.8 L581.0,588.5 L585.0,594.1 L572.4,595.5ZM573.5,597.0 L586.2,595.7 L590.3,601.4 L577.6,602.8ZM578.7,604.4 L591.5,603.0 L593.5,605.9 L580.7,607.3ZM486.4,455.7 L496.6,454.7 L499.1,457.9 L488.8,459.0ZM489.5,460.0 L499.8,459.0 L502.6,462.7 L492.3,463.8ZM493.0,464.8 L503.4,463.8 L506.2,467.6 L495.8,468.6ZM496.6,469.7 L507.0,468.7 L509.9,472.6 L499.4,473.6ZM500.2,474.7 L510.7,473.6 L513.7,477.6 L503.1,478.7ZM503.9,479.8 L514.5,478.7 L517.5,482.7 L506.8,483.8ZM507.6,484.9 L518.3,483.8 L521.4,487.9 L510.6,489.0ZM511.4,490.2 L522.2,489.1 L525.3,493.2 L514.4,494.3ZM515.3,495.5 L526.2,494.4 L529.3,498.6 L518.4,499.7ZM519.2,500.9 L530.2,499.8 L533.4,504.1 L522.3,505.2ZM523.2,506.4 L534.3,505.3 L537.6,509.7 L526.4,510.8ZM527.3,512.1 L538.5,510.9 L541.8,515.4 L530.5,516.5ZM531.5,517.8 L542.7,516.6 L546.1,521.2 L534.7,522.3ZM535.7,523.6 L547.1,522.4 L550.5,527.1 L539.0,528.2ZM540.0,529.6 L551.5,528.4 L555.0,533.1 L543.4,534.3ZM544.4,535.6 L556.0,534.4 L559.5,539.2 L547.9,540.4ZM548.8,541.8 L560.5,540.5 L564.2,545.4 L552.4,546.7ZM553.4,548.0 L565.2,546.8 L568.9,551.8 L557.0,553.0ZM558.0,554.4 L569.9,553.2 L573.7,558.2 L561.7,559.5ZM562.8,560.9 L574.8,559.7 L578.6,564.8 L566.5,566.1ZM567.6,567.6 L579.7,566.3 L583.6,571.6 L571.4,572.9ZM572.5,574.4 L584.8,573.1 L588.8,578.4 L576.4,579.8ZM577.5,581.3 L589.9,580.0 L594.0,585.4 L581.5,586.8ZM582.6,588.3 L595.1,587.0 L599.3,592.6 L586.7,593.9ZM587.8,595.5 L600.5,594.2 L604.7,599.9 L592.0,601.2ZM593.2,602.9 L605.9,601.5 L608.0,604.3 L595.2,605.7ZM497.9,454.5 L508.2,453.5 L510.7,456.8 L500.4,457.8ZM501.2,458.8 L511.4,457.8 L514.3,461.6 L504.0,462.6ZM504.8,463.7 L515.1,462.6 L518.0,466.4 L507.6,467.5ZM508.4,468.5 L518.9,467.5 L521.8,471.4 L511.3,472.4ZM512.1,473.5 L522.7,472.4 L525.7,476.4 L515.1,477.4ZM515.9,478.6 L526.5,477.5 L529.6,481.5 L518.9,482.6ZM519.7,483.7 L530.4,482.6 L533.6,486.7 L522.8,487.8ZM523.6,488.9 L534.4,487.8 L537.6,492.0 L526.7,493.1ZM527.6,494.2 L538.5,493.1 L541.7,497.3 L530.8,498.5ZM531.6,499.7 L542.6,498.5 L545.9,502.8 L534.9,504.0ZM535.8,505.2 L546.8,504.0 L550.2,508.4 L539.0,509.5ZM539.9,510.8 L551.1,509.6 L554.5,514.1 L543.3,515.2ZM544.2,516.5 L555.5,515.3 L558.9,519.8 L547.6,521.0ZM548.5,522.3 L559.9,521.1 L563.5,525.7 L552.0,526.9ZM553.0,528.2 L564.4,527.0 L568.0,531.7 L556.5,532.9ZM557.5,534.2 L569.1,533.0 L572.7,537.8 L561.0,539.0ZM562.1,540.4 L573.7,539.2 L577.5,544.0 L565.7,545.3ZM566.7,546.6 L578.5,545.4 L582.3,550.4 L570.4,551.6ZM571.5,553.0 L583.4,551.8 L587.3,556.8 L575.3,558.1ZM576.3,559.5 L588.4,558.2 L592.3,563.4 L580.2,564.7ZM581.3,566.1 L593.4,564.9 L597.5,570.1 L585.2,571.4ZM586.3,572.9 L598.6,571.6 L602.7,577.0 L590.4,578.3ZM591.5,579.8 L603.9,578.5 L608.0,583.9 L595.6,585.3ZM596.7,586.8 L609.2,585.5 L613.5,591.1 L600.9,592.4ZM602.1,594.0 L614.7,592.6 L619.1,598.3 L606.4,599.7ZM607.6,601.3 L620.3,599.9 L622.5,602.8 L609.7,604.1ZM509.5,453.4 L519.7,452.4 L522.2,455.6 L512.0,456.7ZM512.8,457.7 L523.1,456.7 L526.0,460.4 L515.7,461.4ZM516.5,462.5 L526.8,461.4 L529.8,465.2 L519.4,466.3ZM520.2,467.4 L530.6,466.3 L533.7,470.2 L523.2,471.2ZM524.0,472.3 L534.5,471.3 L537.6,475.2 L527.0,476.2ZM527.9,477.3 L538.5,476.3 L541.6,480.3 L531.0,481.3ZM531.8,482.5 L542.5,481.4 L545.7,485.4 L535.0,486.5ZM535.8,487.7 L546.6,486.6 L549.9,490.7 L539.0,491.8ZM539.9,493.0 L550.8,491.9 L554.1,496.1 L543.1,497.2ZM544.1,498.4 L555.0,497.3 L558.4,501.5 L547.3,502.7ZM548.3,503.9 L559.3,502.8 L562.8,507.1 L551.6,508.2ZM552.6,509.5 L563.7,508.3 L567.2,512.8 L556.0,513.9ZM556.9,515.2 L568.2,514.0 L571.8,518.5 L560.4,519.7ZM561.4,521.0 L572.8,519.8 L576.4,524.4 L564.9,525.6ZM565.9,526.9 L577.4,525.7 L581.1,530.4 L569.5,531.6ZM570.6,532.9 L582.1,531.7 L585.9,536.4 L574.2,537.7ZM575.3,539.0 L586.9,537.8 L590.8,542.6 L579.0,543.9ZM580.1,545.2 L591.8,544.0 L595.7,549.0 L583.9,550.2ZM584.9,551.6 L596.8,550.4 L600.8,555.4 L588.8,556.7ZM589.9,558.1 L601.9,556.8 L606.0,562.0 L593.9,563.2ZM595.0,564.7 L607.1,563.4 L611.2,568.7 L599.0,569.9ZM600.2,571.4 L612.4,570.1 L616.6,575.5 L604.3,576.8ZM605.5,578.3 L617.8,577.0 L622.1,582.4 L609.7,583.8ZM610.8,585.3 L623.3,584.0 L627.7,589.5 L615.1,590.9ZM616.3,592.5 L628.9,591.1 L633.4,596.8 L620.7,598.2ZM621.9,599.8 L634.7,598.4 L636.9,601.2 L624.1,602.6ZM521.0,452.2 L526.6,451.7 L529.2,454.9 L523.6,455.5ZM524.4,456.5 L530.0,456.0 L533.0,459.7 L527.3,460.3ZM528.2,461.3 L533.8,460.7 L536.9,464.5 L531.2,465.1ZM532.0,466.2 L537.7,465.6 L540.8,469.4 L535.0,470.0ZM535.9,471.1 L541.7,470.5 L544.8,474.5 L539.0,475.0ZM539.9,476.1 L545.7,475.6 L548.9,479.5 L543.0,480.1ZM543.9,481.3 L549.8,480.7 L553.0,484.7 L547.1,485.3ZM548.0,486.5 L553.9,485.9 L557.2,490.0 L551.3,490.6ZM552.2,491.7 L558.2,491.1 L561.5,495.3 L555.5,495.9ZM556.5,497.1 L562.5,496.5 L565.9,500.8 L559.8,501.4ZM560.8,502.6 L566.8,502.0 L570.3,506.3 L564.2,507.0ZM565.2,508.2 L571.3,507.6 L574.8,512.0 L568.7,512.6ZM569.7,513.9 L575.8,513.2 L579.4,517.7 L573.2,518.4ZM574.2,519.6 L580.5,519.0 L584.1,523.6 L577.9,524.2ZM578.9,525.5 L585.2,524.9 L588.9,529.5 L582.6,530.2ZM583.6,531.5 L590.0,530.9 L593.8,535.6 L587.4,536.3ZM588.4,537.6 L594.8,537.0 L598.7,541.8 L592.3,542.5ZM593.4,543.9 L599.8,543.2 L603.8,548.1 L597.3,548.8ZM598.4,550.2 L604.9,549.5 L608.9,554.5 L602.4,555.2ZM603.5,556.7 L610.1,556.0 L614.2,561.1 L607.5,561.8ZM608.7,563.2 L615.3,562.5 L619.5,567.8 L612.8,568.5ZM614.0,570.0 L620.7,569.3 L625.0,574.6 L618.2,575.3ZM619.4,576.8 L626.2,576.1 L630.5,581.5 L623.7,582.3ZM624.9,583.8 L631.8,583.1 L636.2,588.6 L629.3,589.4ZM630.6,590.9 L637.5,590.2 L642.0,595.9 L635.0,596.6ZM636.3,598.2 L643.3,597.5 L645.5,600.3 L638.5,601.0Z" fill="#404141"/>
<polygon points="381,628.5 396,624.5 592,603.5 647,598 647,604 592,609.8 568.6,612.4 396,634 383,634.5" fill="#353636"/>
<polygon points="396,625.8 568.6,607.2 570.5,611.2 396,632.2" fill="#d8d9d9"/>
<polygon points="398,626 412,624.5 412,631 398,632.5" fill="#c4c4c4"/>
<polygon points="432.5,619.4 495,612.8 495,615.3 432.5,622" fill="#35a874" opacity="0.85"/>
<circle cx="577.5" cy="607.8" r="1.8" fill="#d0d0d0"/><rect x="581" y="605" width="5" height="4" fill="none" stroke="#c8c8c8" stroke-width="1.2"/><circle cx="590" cy="606.2" r="1.5" fill="#c8c8c8"/>
<polygon points="242,484.5 252.5,484 271,549.5 259.5,550" fill="#b4b4b4" opacity="0.8"/>
<line x1="270.5" y1="641" x2="270" y2="604" stroke="#1a23c8" stroke-width="1.6"/>
<polygon points="267.5,607 270,600 272.5,607" fill="#1a23c8"/>
<line x1="271" y1="641" x2="313" y2="636.6" stroke="#d42020" stroke-width="1.6"/>
<line x1="265" y1="621" x2="270.5" y2="640" stroke="#20c020" stroke-width="1.6"/>
<defs><clipPath id="cb"><polygon points="373.5,278.4 384,280 391,279.4 400,278 415.7,280.5 431.5,278.4 444,281.5 450.4,290 458.8,296.2 464,306.7 471.4,317.2 477.8,326.3 482,332.6 485.1,341 486.2,347.3 484.1,353.6 481,356.7 482,362 485.1,368.3 486.7,376.7 485.1,382 482,385 483,389.3 485.1,395.5 484.4,400.3 479,421.3 477,431.8 473.9,442.3 471.8,452.8 470.7,458 477,468.5 484.4,484.3 488.6,495 495.5,505.7 491.4,519.4 483,526.7 473.1,524 468.4,536.5 463.7,557 455.8,572.7 451,585.3 432.2,589.2 413.3,586.9 403.9,579 400.7,566 385,563 370.5,559 360,551 352.5,545 347,554.4 331.5,558.6 315.7,554.4 311.5,544 312.6,528.2 321,512.5 327.3,491.5 332.5,470.5 326,455 322.8,444.2 317.6,428.5 316.5,418 312.3,397 310.2,386.5 308.1,370.7 308.4,360 311.5,349.7 315.7,338.2 321,328.8 322,320.4 331.5,308.8 336.7,298.3 349.3,291 360.9,285.7"/></clipPath>
<filter id="blur3" x="-20%" y="-20%" width="140%" height="140%"><feGaussianBlur stdDeviation="3"/></filter>
<filter id="blur1" x="-20%" y="-20%" width="140%" height="140%"><feGaussianBlur stdDeviation="1"/></filter>
<filter id="speck" x="0" y="0" width="100%" height="100%" color-interpolation-filters="sRGB"><feTurbulence type="fractalNoise" baseFrequency="0.95" numOctaves="1" seed="7"/><feColorMatrix type="matrix" values="0 0 0 0 0.93  0 0 0 0 0.68  0 0 0 0 0.45  0 0 0 14 -9.0"/></filter>
<filter id="mottle" x="0" y="0" width="100%" height="100%" color-interpolation-filters="sRGB"><feTurbulence type="fractalNoise" baseFrequency="0.09 0.3" numOctaves="2" seed="11"/><feColorMatrix type="matrix" values="0 0 0 0 0.73  0 0 0 0 0.58  0 0 0 0 0.22  0 0 0 7 -3.0"/></filter>
<filter id="dspeck" x="0" y="0" width="100%" height="100%" color-interpolation-filters="sRGB"><feTurbulence type="fractalNoise" baseFrequency="0.8" numOctaves="1" seed="23"/><feColorMatrix type="matrix" values="0 0 0 0 0.42  0 0 0 0 0.2  0 0 0 0 0.08  0 0 0 12 -7.4"/></filter>
<linearGradient id="fade" x1="0" y1="0" x2="0" y2="1"><stop offset="0" stop-color="#fff" stop-opacity="0.6"/><stop offset="0.35" stop-color="#fff" stop-opacity="0.45"/><stop offset="0.6" stop-color="#fff" stop-opacity="0.2"/><stop offset="1" stop-color="#fff" stop-opacity="0.08"/></linearGradient>
<linearGradient id="fade2" x1="0" y1="0" x2="0" y2="1"><stop offset="0" stop-color="#fff"/><stop offset="0.12" stop-color="#fff" stop-opacity="0.95"/><stop offset="0.22" stop-color="#fff" stop-opacity="0.5"/><stop offset="0.33" stop-color="#fff" stop-opacity="0.12"/><stop offset="0.45" stop-color="#fff" stop-opacity="0"/></linearGradient>
<mask id="fm" maskUnits="userSpaceOnUse" x="300" y="270" width="200" height="330"><rect x="300" y="270" width="200" height="330" fill="url(#fade)"/></mask>
<mask id="fm2" maskUnits="userSpaceOnUse" x="300" y="270" width="200" height="330"><rect x="300" y="270" width="200" height="330" fill="url(#fade2)"/></mask>
<clipPath id="co"><polygon points="435.4,415.6 444.5,419.2 453.9,437 454.9,450.5 453.8,461 449.6,467.3 444.4,471.5 446.5,484 449.6,498.8 454.9,507 454.9,515.5 446.5,527 438,531.3 428.6,532.3 424.4,526 425.5,519.7 431.8,505 437,492.5 436,482 431.8,471.5 425.5,461 426.5,453.6 429.7,440 431.2,420"/><polygon points="453.9,422 460,416.5 462.3,430 458,440"/><polygon points="466,413 470.7,411 471.7,440 468.5,480 464.3,482 462.2,470 465.4,440"/></clipPath>
</defs>
<path d="M373.5,278.4C377.4,277.4 381.1,279.8 384.0,280.0C386.9,280.2 388.3,279.7 391.0,279.4C393.7,279.1 395.9,277.8 400.0,278.0C404.1,278.2 410.4,280.4 415.7,280.5C420.9,280.6 426.8,278.2 431.5,278.4C436.2,278.6 440.9,279.6 444.0,281.5C447.1,283.4 447.9,287.6 450.4,290.0C452.9,292.4 456.5,293.4 458.8,296.2C461.1,299.0 461.9,303.2 464.0,306.7C466.1,310.2 469.1,313.9 471.4,317.2C473.7,320.5 476.0,323.7 477.8,326.3C479.6,328.9 480.8,330.2 482.0,332.6C483.2,335.1 484.4,338.6 485.1,341.0C485.8,343.4 486.4,345.2 486.2,347.3C486.0,349.4 485.0,352.0 484.1,353.6C483.2,355.2 481.4,355.3 481.0,356.7C480.6,358.1 481.3,360.1 482.0,362.0C482.7,363.9 484.3,365.9 485.1,368.3C485.9,370.8 486.7,374.4 486.7,376.7C486.7,379.0 485.9,380.6 485.1,382.0C484.3,383.4 482.4,383.8 482.0,385.0C481.6,386.2 482.5,387.6 483.0,389.3C483.5,391.1 484.9,393.7 485.1,395.5C485.3,397.3 484.4,400.3 484.4,400.3C484.4,400.3 480.2,416.1 479.0,421.3C477.8,426.6 477.9,428.3 477.0,431.8C476.1,435.3 474.8,438.8 473.9,442.3C473.0,445.8 472.3,450.2 471.8,452.8C471.3,455.4 469.8,455.4 470.7,458.0C471.6,460.6 474.7,464.1 477.0,468.5C479.3,472.9 482.5,479.9 484.4,484.3C486.3,488.7 486.8,491.4 488.6,495.0C490.5,498.6 495.0,501.6 495.5,505.7C496.0,509.8 493.5,515.9 491.4,519.4C489.3,522.9 486.1,525.9 483.0,526.7C479.9,527.5 475.5,522.4 473.1,524.0C470.7,525.6 470.0,531.0 468.4,536.5C466.8,542.0 465.8,551.0 463.7,557.0C461.6,563.0 457.9,568.0 455.8,572.7C453.7,577.4 454.9,582.5 451.0,585.3C447.1,588.0 438.5,588.9 432.2,589.2C425.9,589.5 418.0,588.6 413.3,586.9C408.6,585.2 406.0,582.5 403.9,579.0C401.8,575.5 403.8,568.7 400.7,566.0C397.6,563.3 390.0,564.2 385.0,563.0C380.0,561.8 374.7,561.0 370.5,559.0C366.3,557.0 363.0,553.3 360.0,551.0C357.0,548.7 354.7,544.4 352.5,545.0C350.3,545.6 350.5,552.1 347.0,554.4C343.5,556.7 336.7,558.6 331.5,558.6C326.3,558.6 319.0,556.8 315.7,554.4C312.4,552.0 312.0,548.4 311.5,544.0C311.0,539.6 311.0,533.5 312.6,528.2C314.2,523.0 318.6,518.6 321.0,512.5C323.4,506.4 325.4,498.5 327.3,491.5C329.2,484.5 332.7,476.6 332.5,470.5C332.3,464.4 327.6,459.4 326.0,455.0C324.4,450.6 324.2,448.6 322.8,444.2C321.4,439.8 318.7,432.9 317.6,428.5C316.6,424.1 317.4,423.2 316.5,418.0C315.6,412.8 313.4,402.2 312.3,397.0C311.2,391.8 310.9,390.9 310.2,386.5C309.5,382.1 308.4,375.1 308.1,370.7C307.8,366.3 307.8,363.5 308.4,360.0C309.0,356.5 310.3,353.3 311.5,349.7C312.7,346.1 314.1,341.7 315.7,338.2C317.3,334.7 319.9,331.8 321.0,328.8C322.1,325.8 320.2,323.7 322.0,320.4C323.8,317.1 329.1,312.5 331.5,308.8C333.9,305.1 333.7,301.3 336.7,298.3C339.7,295.3 345.3,293.1 349.3,291.0C353.3,288.9 356.9,287.8 360.9,285.7C364.9,283.6 369.6,279.3 373.5,278.4Z" fill="#bf5e28" stroke="#9c4a22" stroke-width="1" stroke-opacity="0.7"/>
<g clip-path="url(#cb)">
<rect x="300" y="270" width="200" height="330" fill="#c8652b" mask="url(#fm2)"/>
<rect x="300" y="270" width="200" height="330" filter="url(#mottle)" mask="url(#fm2)" opacity="0.9"/>
<g filter="url(#blur1)" opacity="0.85">
<path d="M378 283 Q388 280 398 284" stroke="#c23530" stroke-width="5" fill="none"/>
<path d="M412 284 Q426 280 440 288" stroke="#c23530" stroke-width="5" fill="none"/>
<path d="M370 294 Q398 297 432 296" stroke="#c23530" stroke-width="3.5" fill="none"/>
<path d="M376 302 Q402 308 430 303" stroke="#c23530" stroke-width="3.5" fill="none"/>
<path d="M392 288 Q405 290 420 289" stroke="#c23530" stroke-width="2.5" fill="none"/>
</g>
<g fill="none" stroke="#b0903c" stroke-width="1.2" opacity="0.42">
<ellipse cx="454" cy="380" rx="4" ry="9"/>
<ellipse cx="454" cy="380" rx="8" ry="15"/>
<ellipse cx="454" cy="380" rx="12" ry="21"/>
<ellipse cx="454" cy="380" rx="16" ry="27"/>
<ellipse cx="454" cy="380" rx="20" ry="33"/>
<ellipse cx="404" cy="346" rx="5" ry="4"/>
<ellipse cx="404" cy="346" rx="10" ry="8"/>
<ellipse cx="404" cy="346" rx="15" ry="12"/>
<ellipse cx="404" cy="346" rx="20" ry="16"/>
<ellipse cx="348" cy="362" rx="6" ry="5"/>
<ellipse cx="348" cy="362" rx="12" ry="9"/>
<ellipse cx="348" cy="362" rx="18" ry="13"/>
</g>
<ellipse cx="451" cy="378" rx="2.5" ry="5" fill="#9a7a30" opacity="0.8"/>
<rect x="300" y="270" width="200" height="330" filter="url(#dspeck)" mask="url(#fm2)" opacity="0.6"/>
<rect x="300" y="270" width="200" height="330" filter="url(#speck)" mask="url(#fm)"/>
</g>
<path d="M374.3,362.9C374.3,362.9 378.5,363.5 378.5,363.5C378.5,363.5 378.5,365.5 378.5,365.5C378.5,365.5 373.9,377.9 372.2,381.2C370.5,384.5 365.3,391.4 363.8,393.8C362.3,396.2 360.1,399.4 359.6,402.2C359.1,405.0 359.2,414.9 359.6,418.0C360.0,421.1 362.7,426.3 362.7,428.5C362.7,430.7 360.3,433.8 359.6,436.9C358.9,440.0 356.5,451.1 356.4,455.0C356.3,458.9 358.9,465.0 358.8,470.5C358.7,476.0 356.1,495.9 355.6,502.0C355.1,508.1 355.3,519.6 354.6,523.0C353.9,526.4 349.5,528.9 349.3,531.4C349.1,533.9 352.8,541.3 352.5,544.0C352.2,546.7 349.4,552.7 347.0,554.4C344.6,556.1 335.2,558.6 331.5,558.6C327.8,558.6 318.0,556.1 315.7,554.4C313.4,552.7 311.9,547.1 311.5,544.0C311.1,540.9 311.5,531.9 312.6,528.2C313.7,524.5 319.3,516.8 321.0,512.5C322.7,508.2 326.0,496.4 327.3,491.5C328.6,486.6 332.7,474.8 332.5,470.5C332.3,466.2 327.1,458.1 326.0,455.0C324.9,451.9 323.8,447.3 322.8,444.2C321.8,441.1 318.3,431.6 317.6,428.5C316.9,425.4 316.5,419.5 316.5,418.0C316.5,416.5 317.6,416.0 318.0,416.0C318.4,416.0 318.9,415.9 319.7,418.0C320.5,420.1 323.3,430.0 325.0,433.7C326.7,437.4 333.1,448.3 334.4,449.5C335.7,450.7 336.9,445.8 336.5,444.2C336.1,442.6 330.5,436.7 331.2,435.8C331.9,434.9 340.8,437.8 342.8,436.9C344.8,436.0 347.3,431.7 348.0,428.5C348.7,425.3 348.3,413.0 349.0,409.6C349.7,406.2 352.2,402.3 354.3,399.0C356.4,395.7 364.7,385.1 367.0,381.2C369.3,377.3 374.3,365.5 374.3,365.5C374.3,365.5 374.3,362.9 374.3,362.9Z" fill="#12bc12"/>
<path d="M352.0,540.0C353.2,540.1 357.5,544.4 360.0,546.0C362.5,547.6 367.2,550.5 370.5,552.0C373.8,553.5 381.2,555.7 385.0,557.0C388.8,558.3 396.9,560.7 399.0,562.0C401.1,563.3 402.6,566.3 400.7,566.5C398.8,566.7 389.0,564.4 385.0,563.5C381.0,562.6 373.8,561.1 370.5,559.5C367.2,557.9 362.6,553.4 360.0,551.5C357.4,549.6 352.1,546.5 351.0,545.0C349.9,543.5 350.8,539.9 352.0,540.0Z" fill="#12bc12"/>
<path d="M430.3,345.7C430.3,345.7 443.0,345.7 443.0,345.7C443.0,345.7 441.0,352.7 440.4,356.4C439.8,360.1 438.3,373.1 437.9,377.8C437.5,382.5 436.9,392.3 436.6,396.7C436.3,401.1 435.4,415.6 435.4,415.6C435.4,415.6 444.5,419.2 444.5,419.2C444.5,419.2 468.6,410.8 468.6,410.8C468.6,410.8 470.7,400.3 470.7,400.3C470.7,400.3 484.4,400.3 484.4,400.3C484.4,400.3 479.9,417.6 479.0,421.3C478.1,425.0 477.6,429.4 477.0,431.8C476.4,434.2 474.5,439.9 473.9,442.3C473.3,444.8 472.2,451.0 471.8,452.8C471.4,454.6 470.1,456.2 470.7,458.0C471.3,459.8 475.4,465.4 477.0,468.5C478.6,471.6 483.0,481.2 484.4,484.3C485.8,487.4 487.3,492.5 488.6,495.0C489.9,497.5 495.2,502.9 495.5,505.7C495.8,508.5 492.9,516.9 491.4,519.4C489.9,521.9 485.1,526.2 483.0,526.7C480.9,527.2 474.8,522.9 473.1,524.0C471.4,525.1 469.5,532.6 468.4,536.5C467.3,540.4 465.2,552.8 463.7,557.0C462.2,561.2 457.3,569.4 455.8,572.7C454.3,576.0 453.8,583.4 451.0,585.3C448.2,587.2 436.6,589.0 432.2,589.2C427.8,589.4 416.6,588.1 413.3,586.9C410.0,585.7 405.4,581.6 403.9,579.0C402.4,576.4 401.6,568.0 400.7,564.9C399.8,561.8 396.9,556.5 396.0,552.3C395.1,548.1 393.2,532.5 392.9,528.7C392.6,524.9 392.7,522.9 393.4,520.0C394.1,517.1 396.9,508.1 398.6,504.0C400.3,499.9 407.1,487.9 408.0,485.0C408.9,482.1 406.7,481.2 406.0,478.8C405.3,476.4 402.2,467.2 401.8,464.0C401.4,460.8 404.0,455.9 402.8,451.5C401.6,447.1 391.3,426.3 391.3,426.3C391.3,426.3 391.5,425.0 391.5,425.0C391.5,425.0 397.6,425.0 397.6,425.0C397.6,425.0 405.9,448.1 408.0,447.5C410.1,446.9 414.4,423.4 415.4,420.0C416.4,416.6 417.1,420.0 416.5,418.0C415.9,416.0 411.7,406.5 410.2,403.0C408.7,399.5 405.1,392.4 403.9,387.9C402.7,383.3 400.0,364.0 400.0,364.0C400.0,364.0 405.0,364.0 405.0,364.0C405.0,364.0 411.9,385.0 414.0,390.4C416.1,395.8 421.3,409.0 422.8,410.5C424.3,412.0 426.3,405.3 426.6,403.0C426.9,400.7 425.6,392.9 425.3,390.4C425.0,387.9 424.7,383.8 424.0,381.6C423.3,379.4 419.9,374.5 419.0,371.5C418.1,368.5 415.9,355.7 415.9,355.7C415.9,355.7 426.6,355.7 426.6,355.7C426.6,355.7 425.2,368.5 425.3,371.5C425.4,374.5 427.1,380.9 427.8,381.6C428.5,382.3 431.0,380.7 431.6,377.8C432.2,374.9 433.1,360.1 432.9,356.4C432.7,352.7 430.3,345.7 430.3,345.7Z" fill="#12bc12"/>
<path d="M435.4,415.6C435.4,415.6 444.5,419.2 444.5,419.2C444.5,419.2 452.2,431.8 453.9,437.0C455.6,442.2 454.9,446.5 454.9,450.5C454.9,454.5 454.7,458.2 453.8,461.0C452.9,463.8 451.2,465.6 449.6,467.3C448.0,469.1 444.9,468.7 444.4,471.5C443.9,474.3 445.6,479.4 446.5,484.0C447.4,488.6 448.2,495.0 449.6,498.8C451.0,502.6 454.0,504.2 454.9,507.0C455.8,509.8 456.3,512.2 454.9,515.5C453.5,518.8 449.3,524.4 446.5,527.0C443.7,529.6 441.0,530.4 438.0,531.3C435.0,532.2 430.9,533.2 428.6,532.3C426.3,531.4 424.9,528.1 424.4,526.0C423.9,523.9 424.3,523.2 425.5,519.7C426.7,516.2 429.9,509.5 431.8,505.0C433.7,500.5 436.3,496.3 437.0,492.5C437.7,488.7 436.9,485.5 436.0,482.0C435.1,478.5 433.6,475.0 431.8,471.5C430.1,468.0 426.4,464.0 425.5,461.0C424.6,458.0 425.8,457.1 426.5,453.6C427.2,450.1 428.9,445.6 429.7,440.0C430.5,434.4 430.2,424.1 431.2,420.0C432.1,415.9 435.4,415.6 435.4,415.6Z" fill="#bf5e28"/>
<polygon points="453.9,422 460,416.5 462.3,430 458,440" fill="#bf5e28"/>
<polygon points="466,413 470.7,411 471.7,440 468.5,480 464.3,482 462.2,470 465.4,440" fill="#bf5e28"/>
<g clip-path="url(#co)"><rect x="400" y="400" width="100" height="140" filter="url(#speck)" opacity="0.6"/></g>
<polygon points="477,405.5 479.5,405 478.5,411 476.5,411" fill="#e5e5e5"/>
</svg>

<div id="title" class="abs"><div class="t abs">Neil Gershenfeld v1</div>
<svg class="abs" style="left:1060px;top:0" width="92" height="24" viewBox="1060 0 92 24">
<line x1="1065" y1="8.5" x2="1075" y2="8.5" stroke="#e6e6e6" stroke-width="1"/>
<rect x="1096.5" y="3.5" width="13" height="11" fill="none" stroke="#e6e6e6" stroke-width="1"/>
<line x1="1096.5" y1="6.5" x2="1109.5" y2="6.5" stroke="#e6e6e6" stroke-width="1"/>
<line x1="1132" y1="5" x2="1141" y2="14" stroke="#e6e6e6" stroke-width="1"/>
<line x1="1141" y1="5" x2="1132" y2="14" stroke="#e6e6e6" stroke-width="1"/>
</svg></div>
<div id="tool" class="abs">
<div class="abs" style="left:831px;top:5px;width:135px;height:24px;border-radius:12px;background:#6e6e6e;overflow:hidden">
<div class="abs" style="left:0;top:0;width:25px;height:24px;background:#00ae42"></div>
<div class="abs" style="left:25px;top:0;width:1px;height:24px;background:#3e4a46"></div>
<div class="abs" style="left:41px;top:3px;color:#a9a9a9;font-size:15.6px;line-height:18px;white-space:nowrap">Slice plate</div>
</div>
<svg class="abs" style="left:840px;top:15px" width="10" height="6" viewBox="0 0 10 6"><path d="M1.5 1.5 L5 4.2 L8.5 1.5" fill="none" stroke="#f2f2f2" stroke-width="1.2"/></svg>
<div class="abs" style="left:981px;top:5px;width:137px;height:24px;border-radius:12px;background:#00ae42;overflow:hidden">
<div class="abs" style="left:24px;top:0;width:2px;height:24px;background:#2f5a40"></div>
<div class="abs" style="left:41px;top:3px;color:#f0f0f0;font-size:16px;line-height:18px;white-space:nowrap">Print plate</div>
</div>
<svg class="abs" style="left:990px;top:15px" width="10" height="6" viewBox="0 0 10 6"><path d="M1.5 1.5 L5 4.2 L8.5 1.5" fill="none" stroke="#f2f2f2" stroke-width="1.2"/></svg>
</div>
<svg class="abs" style="left:1040px;top:150px" width="112" height="790" viewBox="1040 150 112 790">
<rect x="1110" y="182" width="24" height="717" rx="12" fill="#ffffff"/>
<rect x="1116" y="193" width="12" height="694" fill="#00ae42"/>
<circle cx="1122" cy="193" r="11.5" fill="#ffffff"/>
<circle cx="1122" cy="193" r="9.8" fill="#00ae42"/>
<line x1="1116" y1="193" x2="1128" y2="193" stroke="#fff" stroke-width="1"/>
<line x1="1122" y1="187" x2="1122" y2="199" stroke="#fff" stroke-width="1"/>
<circle cx="1122" cy="887.5" r="11.7" fill="#ffffff"/>
<circle cx="1122" cy="887.5" r="9.8" fill="#00ae42"/>
<polygon points="1051,159 1101,159 1101,185.5 1108,193 1051,193" fill="#ffffff"/>
<polygon points="1062,888 1109,887 1101,895 1101,921 1062,921" fill="#ffffff"/>
<text x="1075" y="173" font-family="Liberation Sans" font-size="12.5" fill="#2e9e62" text-anchor="middle">1000</text>
<text x="1075" y="188" font-family="Liberation Sans" font-size="12.5" fill="#2e9e62" text-anchor="middle">200.00</text>
<text x="1082" y="901" font-family="Liberation Sans" font-size="12.5" fill="#2e9e62" text-anchor="middle">1</text>
<text x="1082" y="916" font-family="Liberation Sans" font-size="12.5" fill="#2e9e62" text-anchor="middle">0.20</text>
</svg>

<div id="panel" class="abs">
<div id="ph" class="abs"></div><div class="abs" style="left:0;top:0;width:440px;height:1px;background:#5a5f60"></div>
<svg class="abs" style="left:13px;top:10px" width="14" height="11" viewBox="0 0 14 11"><path d="M1 6 L7 1.5 L13 6 M1 10 L7 5.5 L13 10" fill="none" stroke="#e8e8e8" stroke-width="1.4"/></svg>
<div class="abs txt b" style="left:39px;top:8px;font-size:12.6px">Color Scheme</div>
<div class="abs" style="left:131px;top:8px;width:198px;height:21px;background:#1f1f1f;border:1px solid #3c3c3c;border-radius:4px"></div>
<svg class="abs" style="left:137px;top:16px" width="12" height="6" viewBox="0 0 12 6"><path d="M1 1 L6 4.5 L11 1" fill="none" stroke="#e8e8e8" stroke-width="1.3"/></svg>
<div class="abs txt" style="left:156px;top:10px;">Line Type</div>
<div class="abs txt b" style="left:12px;top:33px;">Line Type</div>
<div class="abs txt b" style="left:138px;top:33px;">Time</div>
<div class="abs txt b" style="left:200px;top:33px;">Percent</div>
<div class="abs txt b" style="left:261px;top:33px;">Used filament</div>
<div class="abs txt b" style="left:383px;top:33px;">Display</div>
<div class="abs" style="left:0px;top:52px;width:439px;height:1px;background:#bdbdbd"></div>
<div class="abs sq" style="left:13px;top:59px;background:#ffd83a"></div>
<div class="abs txt" style="left:30px;top:56px;">Inner wall</div>
<div class="abs txt" style="left:138px;top:56px;">1h14m</div>
<div class="abs txt" style="left:200px;top:56px;">11.1%</div>
<div class="abs txt" style="left:261px;top:56px;">10.69 m</div>
<div class="abs txt" style="left:316px;top:56px;">32.40 g</div>
<div class="abs cb" style="left:386px;top:56px"></div>
<svg class="abs" style="left:388px;top:59px" width="13" height="10" viewBox="0 0 13 10"><path d="M1.5 5 L5 8.5 L12 1.5" fill="none" stroke="#1fae4f" stroke-width="2.2"/></svg>
<div class="abs sq" style="left:13px;top:80px;background:#ff7e36"></div>
<div class="abs txt" style="left:30px;top:77px;">Outer wall</div>
<div class="abs txt" style="left:138px;top:77px;">1h30m</div>
<div class="abs txt" style="left:200px;top:77px;">13.5%</div>
<div class="abs txt" style="left:261px;top:77px;">9.89 m</div>
<div class="abs txt" style="left:316px;top:77px;">29.97 g</div>
<div class="abs cb" style="left:386px;top:77px"></div>
<svg class="abs" style="left:388px;top:80px" width="13" height="10" viewBox="0 0 13 10"><path d="M1.5 5 L5 8.5 L12 1.5" fill="none" stroke="#1fae4f" stroke-width="2.2"/></svg>
<div class="abs sq" style="left:13px;top:101px;background:#1f1fff"></div>
<div class="abs txt" style="left:30px;top:98px;">Overhang wall</div>
<div class="abs txt" style="left:138px;top:98px;">3m29s</div>
<div class="abs txt" style="left:200px;top:98px;">0.5%</div>
<div class="abs txt" style="left:261px;top:98px;">0.13 m</div>
<div class="abs txt" style="left:316px;top:98px;">0.39 g</div>
<div class="abs cb" style="left:386px;top:98px"></div>
<svg class="abs" style="left:388px;top:101px" width="13" height="10" viewBox="0 0 13 10"><path d="M1.5 5 L5 8.5 L12 1.5" fill="none" stroke="#1fae4f" stroke-width="2.2"/></svg>
<div class="abs sq" style="left:13px;top:122px;background:#b03029"></div>
<div class="abs txt" style="left:30px;top:119px;">Sparse infill</div>
<div class="abs txt" style="left:138px;top:119px;">3h48m</div>
<div class="abs txt" style="left:200px;top:119px;">34.3%</div>
<div class="abs txt" style="left:261px;top:119px;">87.92 m</div>
<div class="abs txt" style="left:316px;top:119px;">266.45 g</div>
<div class="abs cb" style="left:386px;top:119px"></div>
<svg class="abs" style="left:388px;top:122px" width="13" height="10" viewBox="0 0 13 10"><path d="M1.5 5 L5 8.5 L12 1.5" fill="none" stroke="#1fae4f" stroke-width="2.2"/></svg>
<div class="abs sq" style="left:13px;top:143px;background:#9a4fcf"></div>
<div class="abs txt" style="left:30px;top:140px;">Internal solid infill</div>
<div class="abs txt" style="left:138px;top:140px;">45m50s</div>
<div class="abs txt" style="left:200px;top:140px;">6.9%</div>
<div class="abs txt" style="left:261px;top:140px;">5.55 m</div>
<div class="abs txt" style="left:316px;top:140px;">16.82 g</div>
<div class="abs cb" style="left:386px;top:140px"></div>
<svg class="abs" style="left:388px;top:143px" width="13" height="10" viewBox="0 0 13 10"><path d="M1.5 5 L5 8.5 L12 1.5" fill="none" stroke="#1fae4f" stroke-width="2.2"/></svg>
<div class="abs sq" style="left:13px;top:164px;background:#f04848"></div>
<div class="abs txt" style="left:30px;top:161px;">Top surface</div>
<div class="abs txt" style="left:138px;top:161px;">3m49s</div>
<div class="abs txt" style="left:200px;top:161px;">0.6%</div>
<div class="abs txt" style="left:261px;top:161px;">0.24 m</div>
<div class="abs txt" style="left:316px;top:161px;">0.74 g</div>
<div class="abs cb" style="left:386px;top:161px"></div>
<svg class="abs" style="left:388px;top:164px" width="13" height="10" viewBox="0 0 13 10"><path d="M1.5 5 L5 8.5 L12 1.5" fill="none" stroke="#1fae4f" stroke-width="2.2"/></svg>
<div class="abs sq" style="left:13px;top:185px;background:#6a5fd0"></div>
<div class="abs txt" style="left:30px;top:182px;">Bottom surface</div>
<div class="abs txt" style="left:138px;top:182px;">1m27s</div>
<div class="abs txt" style="left:200px;top:182px;">0.2%</div>
<div class="abs txt" style="left:261px;top:182px;">0.22 m</div>
<div class="abs txt" style="left:316px;top:182px;">0.65 g</div>
<div class="abs cb" style="left:386px;top:182px"></div>
<svg class="abs" style="left:388px;top:185px" width="13" height="10" viewBox="0 0 13 10"><path d="M1.5 5 L5 8.5 L12 1.5" fill="none" stroke="#1fae4f" stroke-width="2.2"/></svg>
<div class="abs sq" style="left:13px;top:206px;background:#4f82c4"></div>
<div class="abs txt" style="left:30px;top:203px;">Bridge</div>
<div class="abs txt" style="left:138px;top:203px;">5m54s</div>
<div class="abs txt" style="left:200px;top:203px;">0.9%</div>
<div class="abs txt" style="left:261px;top:203px;">0.79 m</div>
<div class="abs txt" style="left:316px;top:203px;">2.40 g</div>
<div class="abs cb" style="left:386px;top:203px"></div>
<svg class="abs" style="left:388px;top:206px" width="13" height="10" viewBox="0 0 13 10"><path d="M1.5 5 L5 8.5 L12 1.5" fill="none" stroke="#1fae4f" stroke-width="2.2"/></svg>
<div class="abs sq" style="left:13px;top:227px;background:#ffffff"></div>
<div class="abs txt" style="left:30px;top:224px;">Gap infill</div>
<div class="abs txt" style="left:138px;top:224px;">56s</div>
<div class="abs txt" style="left:200px;top:224px;">0.1%</div>
<div class="abs txt" style="left:261px;top:224px;">0.01 m</div>
<div class="abs txt" style="left:316px;top:224px;">0.03 g</div>
<div class="abs cb" style="left:386px;top:224px"></div>
<svg class="abs" style="left:388px;top:227px" width="13" height="10" viewBox="0 0 13 10"><path d="M1.5 5 L5 8.5 L12 1.5" fill="none" stroke="#1fae4f" stroke-width="2.2"/></svg>
<div class="abs sq" style="left:13px;top:248px;background:#1ff01f"></div>
<div class="abs txt" style="left:30px;top:245px;">Support</div>
<div class="abs txt" style="left:138px;top:245px;">1h36m</div>
<div class="abs txt" style="left:200px;top:245px;">14.5%</div>
<div class="abs txt" style="left:261px;top:245px;">13.90 m</div>
<div class="abs txt" style="left:316px;top:245px;">42.13 g</div>
<div class="abs cb" style="left:386px;top:245px"></div>
<svg class="abs" style="left:388px;top:248px" width="13" height="10" viewBox="0 0 13 10"><path d="M1.5 5 L5 8.5 L12 1.5" fill="none" stroke="#1fae4f" stroke-width="2.2"/></svg>
<div class="abs sq" style="left:13px;top:269px;background:#127a12"></div>
<div class="abs txt" style="left:30px;top:266px;">Support interface</div>
<div class="abs txt" style="left:138px;top:266px;">1m50s</div>
<div class="abs txt" style="left:200px;top:266px;">0.3%</div>
<div class="abs txt" style="left:261px;top:266px;">0.09 m</div>
<div class="abs txt" style="left:316px;top:266px;">0.28 g</div>
<div class="abs cb" style="left:386px;top:266px"></div>
<svg class="abs" style="left:388px;top:269px" width="13" height="10" viewBox="0 0 13 10"><path d="M1.5 5 L5 8.5 L12 1.5" fill="none" stroke="#1fae4f" stroke-width="2.2"/></svg>
<div class="abs sq" style="left:13px;top:290px;background:#5ecf8f"></div>
<div class="abs txt" style="left:30px;top:287px;">Custom</div>
<div class="abs txt" style="left:138px;top:287px;">5m52s</div>
<div class="abs txt" style="left:200px;top:287px;">0.9%</div>
<div class="abs txt" style="left:261px;top:287px;">0.02 m</div>
<div class="abs txt" style="left:316px;top:287px;">0.07 g</div>
<div class="abs cb" style="left:386px;top:287px"></div>
<svg class="abs" style="left:388px;top:290px" width="13" height="10" viewBox="0 0 13 10"><path d="M1.5 5 L5 8.5 L12 1.5" fill="none" stroke="#1fae4f" stroke-width="2.2"/></svg>
<div class="abs sq" style="left:13px;top:311px;background:#3245a8"></div>
<div class="abs txt" style="left:30px;top:308px;">Travel</div>
<div class="abs txt" style="left:138px;top:308px;">1h49m</div>
<div class="abs txt" style="left:200px;top:308px;">16.4%</div>
<div class="abs cb" style="left:386px;top:308px"></div>
<div class="abs sq" style="left:13px;top:332px;background:#d22fd6"></div>
<div class="abs txt" style="left:30px;top:329px;">Retract</div>
<div class="abs cb" style="left:386px;top:329px"></div>
<div class="abs sq" style="left:13px;top:353px;background:#4bb3d8"></div>
<div class="abs txt" style="left:30px;top:350px;">Unretract</div>
<div class="abs cb" style="left:386px;top:350px"></div>
<div class="abs sq" style="left:13px;top:374px;background:#ffef00"></div>
<div class="abs txt" style="left:30px;top:371px;">Wipe</div>
<div class="abs cb" style="left:386px;top:371px"></div>
<div class="abs sq" style="left:13px;top:395px;background:#e6e6e6"></div>
<div class="abs txt" style="left:30px;top:392px;">Seams</div>
<div class="abs cb" style="left:386px;top:392px"></div>
<svg class="abs" style="left:388px;top:395px" width="13" height="10" viewBox="0 0 13 10"><path d="M1.5 5 L5 8.5 L12 1.5" fill="none" stroke="#1fae4f" stroke-width="2.2"/></svg>
<div class="abs txt b" style="left:12px;top:422px;">Total Estimation</div>
<div class="abs" style="left:0px;top:441px;width:439px;height:1px;background:#bdbdbd"></div>
<div class="abs txt" style="left:12px;top:445px;">Total Filament:</div>
<div class="abs txt" style="left:136px;top:445px;">129.46 m</div>
<div class="abs txt" style="left:205px;top:445px;">392.33 g</div>
<div class="abs txt" style="left:12px;top:464px;">Model Filament:</div>
<div class="abs txt" style="left:136px;top:464px;">115.46 m</div>
<div class="abs txt" style="left:205px;top:464px;">349.92 g</div>
<div class="abs txt" style="left:12px;top:483px;">Cost:</div>
<div class="abs txt" style="left:136px;top:483px;">9.80</div>
<div class="abs txt" style="left:12px;top:502px;">Prepare time:</div>
<div class="abs txt" style="left:136px;top:502px;">5m42s</div>
<div class="abs txt" style="left:12px;top:521px;">Model printing time:</div>
<div class="abs txt" style="left:136px;top:521px;">11h1m</div>
<div class="abs txt" style="left:12px;top:540px;">Total time:</div>
<div class="abs txt" style="left:136px;top:540px;">11h6m</div>
</div>

</body></html>
